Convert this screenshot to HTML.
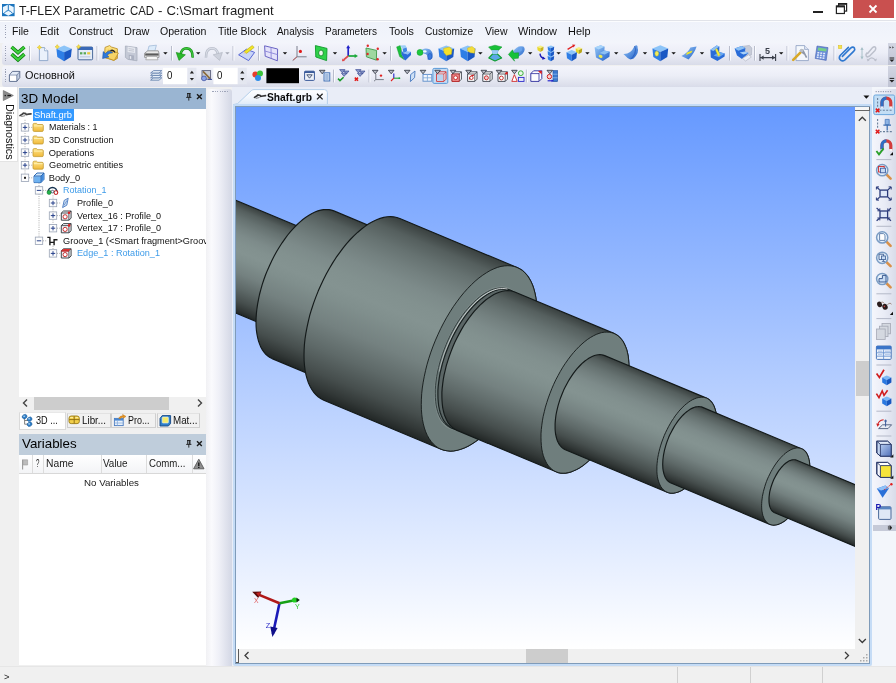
<!DOCTYPE html><html><head><meta charset="utf-8"><title>T-FLEX Parametric CAD</title><style>
*{margin:0;padding:0;box-sizing:border-box}
html,body{width:896px;height:683px;overflow:hidden;background:#f0f0f0;font-family:"Liberation Sans",sans-serif}
#r{position:relative;width:896px;height:683px;overflow:hidden;will-change:transform}
.a{position:absolute}
.t{position:absolute;white-space:nowrap;transform-origin:0 50%;display:block}
svg{position:absolute;overflow:visible}
</style></head><body><div id="r"><div class="a" style="left:0px;top:0px;width:896px;height:19.5px;background:#fff"></div>
<svg style="left:2.2px;top:3.7px" width="13" height="13" viewBox="0 0 13 13"><rect x="0" y="0" width="12.6" height="12.2" fill="#1b74bd"/><path d="M6.3 0.6L11.7 3L11.7 8.8L6.3 11.7L0.9 8.8L0.9 3Z" fill="#eaf6ff"/><path d="M6.3 0.6L6.3 6M2 9.4Q6.3 3.6 10.6 9.4" stroke="#1b74bd" stroke-width="1" fill="none"/></svg>
<span class="t" style="left:19.40px;top:3.25px;font-size:13.1px;line-height:16px;color:#1c1c1c;transform:scaleX(0.9346);">T-FLEX</span>
<span class="t" style="left:64.30px;top:3.25px;font-size:13.1px;line-height:16px;color:#1c1c1c;transform:scaleX(0.9664);">Parametric</span>
<span class="t" style="left:129.90px;top:3.25px;font-size:13.1px;line-height:16px;color:#1c1c1c;transform:scaleX(0.8713);">CAD</span>
<span class="t" style="left:158.00px;top:3.25px;font-size:13.1px;line-height:16px;color:#1c1c1c;transform:scaleX(1.0087);">-</span>
<span class="t" style="left:166.40px;top:3.25px;font-size:13.1px;line-height:16px;color:#1c1c1c;">C:\Smart</span>
<span class="t" style="left:222.00px;top:3.25px;font-size:13.1px;line-height:16px;color:#1c1c1c;">fragment</span>
<div class="a" style="left:853px;top:0px;width:41px;height:17.5px;background:#c9504f"></div>
<svg style="left:868px;top:4px" width="10" height="10"><path d="M1.5 1.5L8.5 8.5M8.5 1.5L1.5 8.5" stroke="#fff" stroke-width="1.8"/></svg>
<div class="a" style="left:812.5px;top:10.7px;width:10px;height:2px;background:#222"></div>
<svg style="left:835px;top:2px" width="13" height="13"><rect x="3.6" y="1.6" width="8" height="7.5" fill="none" stroke="#222" stroke-width="1.2"/><rect x="3.6" y="1.2" width="8" height="1.6" fill="#222"/><rect x="1.4" y="4" width="8" height="7.5" fill="#fff" stroke="#222" stroke-width="1.2"/><rect x="1.4" y="3.6" width="8" height="1.8" fill="#222"/></svg>
<div class="a" style="left:0px;top:19.5px;width:896px;height:23px;background:linear-gradient(#e1e3e9 0,#e1e3e9 1px,#fbfcfe 1px,#fbfcfe 2px,#eff2fa 2px,#f1f4fb 60%,#f3f5fb)"></div>
<div class="a" style="left:4.5px;top:24.5px;width:1.2px;height:1.2px;background:#9aa0b4"></div>
<div class="a" style="left:4.5px;top:26.9px;width:1.2px;height:1.2px;background:#9aa0b4"></div>
<div class="a" style="left:4.5px;top:29.3px;width:1.2px;height:1.2px;background:#9aa0b4"></div>
<div class="a" style="left:4.5px;top:31.7px;width:1.2px;height:1.2px;background:#9aa0b4"></div>
<div class="a" style="left:4.5px;top:34.1px;width:1.2px;height:1.2px;background:#9aa0b4"></div>
<div class="a" style="left:4.5px;top:36.5px;width:1.2px;height:1.2px;background:#9aa0b4"></div>
<span class="t" style="left:12.00px;top:26.42px;font-size:10.2px;line-height:12px;color:#111;transform:scaleX(1.0344);">File</span>
<span class="t" style="left:40.00px;top:26.42px;font-size:10.2px;line-height:12px;color:#111;transform:scaleX(1.0810);">Edit</span>
<span class="t" style="left:69.00px;top:26.42px;font-size:10.2px;line-height:12px;color:#111;transform:scaleX(1.0081);">Construct</span>
<span class="t" style="left:123.50px;top:26.42px;font-size:10.2px;line-height:12px;color:#111;transform:scaleX(1.0714);">Draw</span>
<span class="t" style="left:160.00px;top:26.42px;font-size:10.2px;line-height:12px;color:#111;transform:scaleX(1.0382);">Operation</span>
<span class="t" style="left:217.50px;top:26.42px;font-size:10.2px;line-height:12px;color:#111;transform:scaleX(1.0393);">Title Block</span>
<span class="t" style="left:277.00px;top:26.42px;font-size:10.2px;line-height:12px;color:#111;transform:scaleX(0.9742);">Analysis</span>
<span class="t" style="left:325.00px;top:26.42px;font-size:10.2px;line-height:12px;color:#111;transform:scaleX(0.9864);">Parameters</span>
<span class="t" style="left:388.50px;top:26.42px;font-size:10.2px;line-height:12px;color:#111;transform:scaleX(1.0500);">Tools</span>
<span class="t" style="left:425.00px;top:26.42px;font-size:10.2px;line-height:12px;color:#111;">Customize</span>
<span class="t" style="left:484.50px;top:26.42px;font-size:10.2px;line-height:12px;color:#111;transform:scaleX(1.0263);">View</span>
<span class="t" style="left:518.00px;top:26.42px;font-size:10.2px;line-height:12px;color:#111;transform:scaleX(1.0751);">Window</span>
<span class="t" style="left:567.50px;top:26.42px;font-size:10.2px;line-height:12px;color:#111;transform:scaleX(1.0726);">Help</span>
<div class="a" style="left:2px;top:42.5px;width:894px;height:22px;background:linear-gradient(#f3f4fb,#eceef7 45%,#d9dce9);border-radius:3px 0 0 3px"></div>
<div class="a" style="left:888px;top:42.5px;width:8px;height:22px;background:linear-gradient(#d3d6e3,#bfc3d3)"></div>
<div class="a" style="left:2px;top:66px;width:894px;height:20.5px;background:linear-gradient(#f3f4fb,#eceef7 45%,#d9dce9);border-radius:3px 0 0 3px"></div>
<div class="a" style="left:888px;top:66px;width:8px;height:20.5px;background:linear-gradient(#d3d6e3,#bfc3d3)"></div>
<div class="a" style="left:4.5px;top:45.5px;width:1.2px;height:1.2px;background:#9aa0b4"></div>
<div class="a" style="left:4.5px;top:47.9px;width:1.2px;height:1.2px;background:#9aa0b4"></div>
<div class="a" style="left:4.5px;top:50.3px;width:1.2px;height:1.2px;background:#9aa0b4"></div>
<div class="a" style="left:4.5px;top:52.7px;width:1.2px;height:1.2px;background:#9aa0b4"></div>
<div class="a" style="left:4.5px;top:55.1px;width:1.2px;height:1.2px;background:#9aa0b4"></div>
<div class="a" style="left:4.5px;top:57.5px;width:1.2px;height:1.2px;background:#9aa0b4"></div>
<div class="a" style="left:4.5px;top:59.9px;width:1.2px;height:1.2px;background:#9aa0b4"></div>
<div class="a" style="left:4.5px;top:69.0px;width:1.2px;height:1.2px;background:#9aa0b4"></div>
<div class="a" style="left:4.5px;top:71.4px;width:1.2px;height:1.2px;background:#9aa0b4"></div>
<div class="a" style="left:4.5px;top:73.8px;width:1.2px;height:1.2px;background:#9aa0b4"></div>
<div class="a" style="left:4.5px;top:76.2px;width:1.2px;height:1.2px;background:#9aa0b4"></div>
<div class="a" style="left:4.5px;top:78.6px;width:1.2px;height:1.2px;background:#9aa0b4"></div>
<div class="a" style="left:4.5px;top:81.0px;width:1.2px;height:1.2px;background:#9aa0b4"></div>
<svg style="left:0;top:0" width="896" height="66"><defs><linearGradient id="bl" x1="0" y1="0" x2="1" y2="1"><stop offset="0" stop-color="#9ccbf8"/><stop offset="1" stop-color="#1f5fc8"/></linearGradient><linearGradient id="gr" x1="0" y1="0" x2="0" y2="1"><stop offset="0" stop-color="#5fe05f"/><stop offset="1" stop-color="#129a12"/></linearGradient><linearGradient id="fy" x1="0" y1="0" x2="0" y2="1"><stop offset="0" stop-color="#ffe98a"/><stop offset="1" stop-color="#eab43a"/></linearGradient></defs><path d="M11.6 47.0L18 52.6L24.4 47.0" fill="none" stroke="#0d7a0d" stroke-width="3.6" stroke-linejoin="miter"/><path d="M11.6 47.0L18 52.6L24.4 47.0" fill="none" stroke="#3fd23f" stroke-width="2"/><path d="M11.6 54.2L18 59.800000000000004L24.4 54.2" fill="none" stroke="#0d7a0d" stroke-width="3.6" stroke-linejoin="miter"/><path d="M11.6 54.2L18 59.800000000000004L24.4 54.2" fill="none" stroke="#3fd23f" stroke-width="2"/><path d="M29.5 46V60.6" stroke="#b9bdcc" stroke-width="1"/><path d="M30.5 46V60.6" stroke="#fafbfe" stroke-width="1"/><path d="M39.4 47.6L44.6 47.6L47.8 50.8L47.8 60.6L39.4 60.6Z" fill="#eaf1fb" stroke="#8aa4c8" stroke-width="0.9" stroke-linejoin="round" /><path d="M44.6 47.6V50.8H47.8" fill="#fff" stroke="#8aa4c8" stroke-width="0.8"/><path d="M39.4 45.199999999999996L40.199999999999996 46.6L41.6 47.4L40.199999999999996 48.199999999999996L39.4 49.6L38.6 48.199999999999996L37.199999999999996 47.4L38.6 46.6Z" fill="#f6e04a" stroke="#d8b820" stroke-width="0.5"/><path d="M56.4 48.7L64.1 45.6L71.8 48.7L64.1 52.2Z" fill="#8cc4f8" /><path d="M56.4 48.7L64.1 52.2L64.1 61.2L57.3 57.1Z" fill="#2e7ee6" /><path d="M71.8 48.7L64.1 52.2L64.1 61.2L70.9 57.1Z" fill="#1a58c4" /><path d="M57.2 44.599999999999994L58.0 46.0L59.400000000000006 46.8L58.0 47.599999999999994L57.2 49.0L56.400000000000006 47.599999999999994L55.0 46.8L56.400000000000006 46.0Z" fill="#f6e04a" stroke="#d8b820" stroke-width="0.5"/><rect x="78" y="47" width="14.6" height="12.8" rx="1" fill="#e4ecf8" stroke="#4a6a9a" stroke-width="1"/><rect x="78" y="47" width="14.6" height="3" fill="#3a6ab8"/><rect x="80" y="52.2" width="2.4" height="2.2" fill="#58a858"/><rect x="83.6" y="52.2" width="2.4" height="2.2" fill="#58a858"/><rect x="87.2" y="52.2" width="3" height="2.2" fill="#e8c83a"/><path d="M80 56.8H90.4" stroke="#c4d0e4" stroke-width="1.4"/><path d="M78.6 44.599999999999994L79.39999999999999 46.0L80.8 46.8L79.39999999999999 47.599999999999994L78.6 49.0L77.8 47.599999999999994L76.39999999999999 46.8L77.8 46.0Z" fill="#f6e04a" stroke="#d8b820" stroke-width="0.5"/><path d="M97 46V60.6" stroke="#b9bdcc" stroke-width="1"/><path d="M98 46V60.6" stroke="#fafbfe" stroke-width="1"/><path d="M105.0 47.4L109.6 45.6L111.4 47.0L117.4 48.8L117.4 58.4L113.8 60.4L104.4 57.4Z" fill="url(#fy)" stroke="#b88a22" stroke-width="0.8" stroke-linejoin="round" /><path d="M108.4 50.2L118.4 53.0L114.2 60.4L104.6 57.2Z" fill="#f7d466" stroke="#b88a22" stroke-width="0.7" stroke-linejoin="round" /><path d="M112.8 52.8Q109.4 49.2 105.4 53.4L103.2 51.6L102.6 58.6L109 57L107 55.2Q109.6 52.8 112.8 52.8Z" fill="#2f78d8" stroke="#1a4a9a" stroke-width="0.5"/><path d="M110.4 50.6Q113.6 49.4 115 52.4" stroke="#222" stroke-width="1.3" fill="none"/><path d="M125.4 46.0L137.0 47.6L137.0 60.8L128.0 59.4L125.4 57.4Z" fill="#c4c9d6" stroke="#a8aebd" stroke-width="0.8" stroke-linejoin="round" /><path d="M127.6 46.6L135.0 47.8L135.0 53.0L127.6 52.0Z" fill="#e6e9f0" /><path d="M128.6 48.6L134 49.4M128.6 50.4L134 51.2" stroke="#b4b9c6" stroke-width="0.7"/><path d="M128.8 54.8L134.0 55.6L134.0 60.2L128.8 59.4Z" fill="#aab0c0" /><path d="M129.8 56.0L131.2 56.2L131.2 59.0L129.8 58.8Z" fill="#e6e9f0" /><path d="M149.0 46.0L156.4 45.2L154.8 51.2L147.6 51.6Z" fill="#dcebfa" stroke="#9ab4d4" stroke-width="0.7" stroke-linejoin="round" /><path d="M144.6 53.2L147.8 50.8L158.2 50.8L159.0 53.2L159.0 57.4L144.6 57.4Z" fill="#e8e8e8" stroke="#8a8a8a" stroke-width="0.8" stroke-linejoin="round" /><path d="M145.2 53.4L158.6 53.4L158.6 55.6L145.2 55.6Z" fill="#5a5a5a" /><path d="M146.6 56.4L157.0 56.4L158.0 59.8L145.8 59.8Z" fill="#f6f6f6" stroke="#9a9a9a" stroke-width="0.7" stroke-linejoin="round" /><path d="M163.20000000000002 52.2H167.6L165.4 54.6Z" fill="#111"/><path d="M171.5 46V60.6" stroke="#b9bdcc" stroke-width="1"/><path d="M172.5 46V60.6" stroke="#fafbfe" stroke-width="1"/><path d="M192.6 57.6Q193 48.6 186.6 48.2Q181.8 48.4 180.6 54" stroke="#138a13" stroke-width="2.5" fill="none"/><path d="M192.6 57.6Q193 48.6 186.6 48.2Q181.8 48.4 180.6 54" stroke="#3cc83c" stroke-width="1.2" fill="none"/><path d="M176.2 52.4L185.4 54.8L179 60.4Z" fill="#2cb82c" stroke="#138a13" stroke-width="0.6" stroke-linejoin="round"/><path d="M196.0 52.2H200.39999999999998L198.2 54.6Z" fill="#111"/><path d="M206 57.6Q205.6 48.6 212 48.2Q216.8 48.4 218 54" stroke="#b4b9c6" stroke-width="2.5" fill="none"/><path d="M206 57.6Q205.6 48.6 212 48.2Q216.8 48.4 218 54" stroke="#d8dce6" stroke-width="1.2" fill="none"/><path d="M222.4 52.4L213.2 54.8L219.6 60.4Z" fill="#cdd1dc" stroke="#aeb3c0" stroke-width="0.6" stroke-linejoin="round"/><path d="M225.20000000000002 52.2H229.6L227.4 54.6Z" fill="#a4a8b4"/><path d="M233 46V60.6" stroke="#b9bdcc" stroke-width="1"/><path d="M234 46V60.6" stroke="#fafbfe" stroke-width="1"/><path d="M238.6 54.8L246.4 49.2L254.6 52.4L248.6 60.6Z" fill="#c8d4f8" stroke="#4a5ad0" stroke-width="0.9" stroke-linejoin="round" /><path d="M244.2 51.6L252.2 45.6L254.2 47.4L246.4 53.4Z" fill="#f0e628" stroke="#b8a810" stroke-width="0.6" stroke-linejoin="round" /><path d="M244.2 51.6L246.4 53.4L243.4 53.6Z" fill="#e8c8a0" /><path d="M258.5 46V60.6" stroke="#b9bdcc" stroke-width="1"/><path d="M259.5 46V60.6" stroke="#fafbfe" stroke-width="1"/><path d="M264.6 45.8L277.6 49.0L277.4 60.8L265.2 56.2Z" fill="#e4e2fa" stroke="#6a64c4" stroke-width="1" stroke-linejoin="round" /><path d="M271 47.4L271.2 58.4M264.8 51L277.5 54.6" stroke="#8a84d8" stroke-width="0.9"/><path d="M282.8 52.2H287.2L285 54.6Z" fill="#111"/><path d="M297 46V56.8H306.6M297 56.8L292.6 60.6" stroke="#7a7f8c" stroke-width="1" fill="none"/><path d="M297 56.8L293 60.2" stroke="#c06a6a" stroke-width="1"/><circle cx="300.4" cy="51.4" r="1.6" fill="#e01818"/><path d="M315.4 45.6L327.0 48.4L326.6 60.6L315.8 57.0Z" fill="#2fd24a" stroke="#0f9a2a" stroke-width="0.9" stroke-linejoin="round" /><ellipse cx="321" cy="53" rx="2.4" ry="3" fill="#eef6ee" stroke="#0f8a24" stroke-width="0.9"/><path d="M332.8 52.2H337.2L335 54.6Z" fill="#111"/><path d="M348.2 56V47" stroke="#2222c8" stroke-width="1.7"/><path d="M346.2 48.2L348.2 45L350.2 48.2Z" fill="#2222c8"/><path d="M348.2 56H355.6" stroke="#18a838" stroke-width="1.7"/><path d="M354.6 54L358 56L354.6 58Z" fill="#18a838"/><path d="M348.2 56L343.6 59.8" stroke="#e04848" stroke-width="1.7"/><path d="M342.4 58.4L345 61L342 61.2Z" fill="#e04848"/><path d="M366.0 48.0L376.6 50.4L376.4 60.2L366.4 56.8Z" fill="#9ed8a0" stroke="#3f9a4a" stroke-width="0.9" stroke-linejoin="round" /><circle cx="367.8" cy="45.8" r="1.2" fill="#e02828"/><circle cx="377.8" cy="48.8" r="1.2" fill="#e02828"/><circle cx="377.6" cy="59.2" r="1.2" fill="#e02828"/><circle cx="367.6" cy="54" r="1.2" fill="#e02828"/><path d="M382.40000000000003 52.2H386.8L384.6 54.6Z" fill="#111"/><path d="M390.5 46V60.6" stroke="#b9bdcc" stroke-width="1"/><path d="M391.5 46V60.6" stroke="#fafbfe" stroke-width="1"/><path d="M396.6 46.9L400.2 45.6L401.2 48.8L401.6 54.4L404.2 59.6L399.6 56.6Z" fill="#1cc03c" stroke="#0f8f28" stroke-width="0.4" stroke-linejoin="round" /><path d="M400.2 45.6L405.4 45.2L406.6 47.4L402.6 48.8Z" fill="#9ccdf8" /><path d="M402.6 48.8L406.6 47.4L407.2 51.2L403.4 53.2Z" fill="#3f86e4" /><path d="M403.4 53.2L407.2 51.2L411.0 51.8L407.8 54.4Z" fill="#8cc0f6" /><path d="M401.4 50.0L403.4 53.2L407.8 54.4L411.0 51.8L411.0 55.0L405.4 60.4L404.2 59.6L401.6 54.4Z" fill="#2a6cd8" /><path d="M419.2 52Q424 46.4 430 49.6Q433.6 52.6 432.4 58Q430 60.8 427.6 59.4Q428.4 54.4 424.4 53.8Z" fill="url(#bl)"/><ellipse cx="429.8" cy="56.4" rx="2" ry="3" fill="#3a7ae0" stroke="#1f55b4" stroke-width="0.5"/><circle cx="420" cy="52.4" r="3" fill="#1ec83c" stroke="#0f9a28" stroke-width="0.5"/><ellipse cx="424.8" cy="51.4" rx="1.8" ry="1.2" fill="#f4faff"/><path d="M438.4 48.6L446.3 45.4L454.2 48.6L446.3 52.0Z" fill="#8cc4f8" /><path d="M438.4 48.6L446.3 52.0L446.3 61.2L439.3 57.1Z" fill="#2e7ee6" /><path d="M454.2 48.6L446.3 52.0L446.3 61.2L453.3 57.1Z" fill="#1a58c4" /><path d="M443.6 48.4L449.6 47.0L452.0 49.8L451.4 54.2L446.4 55.4L444.0 52.6Z" fill="#f4e02a" stroke="#c8b018" stroke-width="0.5" stroke-linejoin="round" /><path d="M460.0 48.6L467.7 45.4L475.4 48.6L467.7 52.0Z" fill="#8cc4f8" /><path d="M460.0 48.6L467.7 52.0L467.7 61.2L460.9 57.1Z" fill="#2e7ee6" /><path d="M475.4 48.6L467.7 52.0L467.7 61.2L474.5 57.1Z" fill="#1a58c4" /><path d="M467.6 48.0L472.0 46.4L475.0 48.8L474.6 53.2L470.4 52.8L467.6 51.0Z" fill="#f2dc3a" stroke="#c8b018" stroke-width="0.4" stroke-linejoin="round" /><path d="M478.2 52.2H482.59999999999997L480.4 54.6Z" fill="#111"/><path d="M488.6 47.0L495.0 45.2L502.0 47.0L498.6 50.2L491.6 50.2Z" fill="#18c038" stroke="#0f9428" stroke-width="0.5" stroke-linejoin="round" /><path d="M491.6 50.2L498.6 50.2L497.4 54.0L501.6 58.0L495.0 61.0L488.8 58.0L492.6 54.0Z" fill="url(#bl)" /><path d="M492.6 54.0L497.4 54.0L501.6 58.0L495.0 61.0L488.8 58.0Z" fill="#5aa8e8" stroke="#12a030" stroke-width="1.1" stroke-linejoin="round" /><path d="M492.2 50.4L498.0 50.4L497.4 54.0L492.6 54.0Z" fill="#9ccdf8" /><path d="M512.6 52Q517.6 44.6 523.4 46.6Q526.4 49.6 522.4 54Q518.4 57 514.6 58.6Z" fill="url(#bl)"/><path d="M519.8 47Q522.6 46.6 521.8 50.4Q519.8 52.4 517.4 51.6Z" fill="#6aa4ec"/><path d="M508.4 54.4L512.6 49.8L513.6 53.0L518.6 52.8L518.4 58.2L513.6 58.6L514.6 61.2Z" fill="#16c238" stroke="#0e9228" stroke-width="0.5" stroke-linejoin="round" /><path d="M528.0 52.2H532.4000000000001L530.2 54.6Z" fill="#111"/><path d="M537.2 46.7L540.4 45.4L543.6 46.7L540.4 48.2Z" fill="#f8f080" /><path d="M537.2 46.7L540.4 48.2L540.4 52.0L537.6 50.3Z" fill="#e8d82a" /><path d="M543.6 46.7L540.4 48.2L540.4 52.0L543.2 50.3Z" fill="#c8b418" /><path d="M540 53.6Q540.4 57.4 543.6 58.2" stroke="#1a1ab8" stroke-width="1.4" fill="none"/><path d="M542.8 56.4L545.6 58.8L542.2 59.8Z" fill="#1a1ab8"/><path d="M547.6 55.9L550.9 54.6L554.2 55.9L550.9 57.4Z" fill="#8cc4f8" /><path d="M547.6 55.9L550.9 57.4L550.9 61.2L548.0 59.5Z" fill="#2e7ee6" /><path d="M554.2 55.9L550.9 57.4L550.9 61.2L553.8 59.5Z" fill="#1a58c4" /><path d="M547.6 51.3L550.9 50.0L554.2 51.3L550.9 52.8Z" fill="#8cc4f8" /><path d="M547.6 51.3L550.9 52.8L550.9 56.6L548.0 54.9Z" fill="#2e7ee6" /><path d="M554.2 51.3L550.9 52.8L550.9 56.6L553.8 54.9Z" fill="#1a58c4" /><path d="M547.6 46.7L550.9 45.4L554.2 46.7L550.9 48.2Z" fill="#8cc4f8" /><path d="M547.6 46.7L550.9 48.2L550.9 52.0L548.0 50.3Z" fill="#2e7ee6" /><path d="M554.2 46.7L550.9 48.2L550.9 52.0L553.8 50.3Z" fill="#1a58c4" /><path d="M556.4 52.2H560.8000000000001L558.6 54.6Z" fill="#111"/><path d="M575.6 48.4L578.9 47.0L582.2 48.4L578.9 49.9Z" fill="#f8f080" /><path d="M575.6 48.4L578.9 49.9L578.9 54.0L576.0 52.2Z" fill="#e8d82a" /><path d="M582.2 48.4L578.9 49.9L578.9 54.0L581.8 52.2Z" fill="#b8a418" /><path d="M566.4 52.2L571.7 50.0L577.0 52.2L571.7 54.7Z" fill="#8cc4f8" /><path d="M566.4 52.2L571.7 54.7L571.7 61.2L567.0 58.3Z" fill="#2e7ee6" /><path d="M577.0 52.2L571.7 54.7L571.7 61.2L576.4 58.3Z" fill="#1a58c4" /><path d="M567.6 49.4L573.6 45.8" stroke="#e02020" stroke-width="1.3"/><path d="M572.2 44.6L575.4 44.8L573.6 47.4Z" fill="#e02020"/><path d="M585.1999999999999 52.2H589.6L587.4 54.6Z" fill="#111"/><path d="M594.6 47.6L600.6 45.2L604.6 46.8L604.4 50.4L609.8 51.8L609.4 56.8L602.8 61.0L596.0 57.6Z" fill="url(#bl)" /><path d="M594.6 47.6L600.6 45.2L604.6 46.8L598.6 49.6Z" fill="#a8d4fa" /><path d="M604.4 50.4L609.8 51.8L604.6 54.6L599.6 53.0Z" fill="#8cc0f4" /><ellipse cx="600.6" cy="56.4" rx="2" ry="1.4" fill="#f0ea50" transform="rotate(20 600.6 56.4)"/><path d="M614.0 52.2H618.4000000000001L616.2 54.6Z" fill="#111"/><path d="M623.4 54Q630.6 54.4 634.6 46Q638 44 637.6 48Q639.6 52.4 633.6 58.6Q630.6 60.4 627.6 58Z" fill="url(#bl)"/><path d="M634.6 46Q636.4 49 634.8 53.6Q633.4 57 630.4 59.4" stroke="#1a4ab0" stroke-width="0.6" fill="none"/><path d="M642.8 52.2H647.2L645 54.6Z" fill="#111"/><path d="M652.4 48.4L660.3 45.2L668.2 48.4L660.3 51.9Z" fill="#8cc4f8" /><path d="M652.4 48.4L660.3 51.9L660.3 61.2L653.3 57.0Z" fill="#2e7ee6" /><path d="M668.2 48.4L660.3 51.9L660.3 61.2L667.3 57.0Z" fill="#1a58c4" /><ellipse cx="656.8" cy="53.6" rx="1.9" ry="2.6" fill="#f2ec5a" stroke="#b8b020" stroke-width="0.4"/><path d="M671.4 52.2H675.8000000000001L673.6 54.6Z" fill="#111"/><path d="M681.4 56Q688 53 690.4 47.6L696.6 46.6Q694.6 53 688.6 59.6Z" fill="url(#bl)"/><path d="M687.0 52.4L692.6 50.4L691.4 52.8L686.0 55.0Z" fill="#f0e628" /><path d="M699.8 52.2H704.2L702 54.6Z" fill="#111"/><path d="M710.4 49.8L716.6 45.4L719.4 46.4L719.2 52.0L724.8 53.4L724.6 56.6L717.4 61.0L710.8 57.4Z" fill="#2a6cd8" /><path d="M710.4 49.8L716.6 45.4L719.4 46.4L713.4 51.0Z" fill="#8cc0f4" /><path d="M713.6 55.4L719.2 52.0L724.8 53.4L719.0 57.2Z" fill="#6aa8f0" /><path d="M715.2 49.6L717.0 48.4L720.2 55.0L718.2 56.2Z" fill="#f4ec3a" stroke="#c8b818" stroke-width="0.3" stroke-linejoin="round" /><path d="M729.5 46V60.6" stroke="#b9bdcc" stroke-width="1"/><path d="M730.5 46V60.6" stroke="#fafbfe" stroke-width="1"/><path d="M742.0 46.4L749.4 45.4L751.8 48.0L751.4 55.0L745.0 56.4Z" fill="#c8ccd8" stroke="#a0a6b6" stroke-width="0.5" stroke-linejoin="round" /><path d="M734.6 48.6L741.6 46.0L745.4 48.0L745.0 51.6L748.6 53.0L742.0 59.0L737.0 55.6Z" fill="#2a6cd8" /><path d="M734.6 48.6L741.6 46.0L745.4 48.0L738.4 50.8Z" fill="#8cc0f4" /><path d="M739.6 52.4L745.0 51.6L748.6 53.0L743.4 54.6Z" fill="#a8d0f8" /><path d="M742.4 58.4L748.6 54.8L751.4 57.0L745.6 61.0Z" fill="#eef0f6" stroke="#a0a6b6" stroke-width="0.5" stroke-linejoin="round" /><path d="M754.5 46V60.6" stroke="#b9bdcc" stroke-width="1"/><path d="M755.5 46V60.6" stroke="#fafbfe" stroke-width="1"/><path d="M760 54V61M775.6 54V61M760.6 57.6H775" stroke="#3a3f4a" stroke-width="1.1" fill="none"/><path d="M760.4 57.6L763.6 55.4V59.8ZM775.2 57.6L772 55.4V59.8Z" fill="#3a3f4a"/><text x="765" y="54" font-family="Liberation Sans, sans-serif" font-weight="bold" font-size="9" fill="#3a3f4a">5</text><path d="M779.0 52.2H783.4000000000001L781.2 54.6Z" fill="#111"/><path d="M787 46V60.6" stroke="#b9bdcc" stroke-width="1"/><path d="M788 46V60.6" stroke="#fafbfe" stroke-width="1"/><path d="M796.0 45.6L804.6 45.6L808.4 49.4L808.4 60.6L796.0 60.6Z" fill="#f4f7fc" stroke="#8a9cc0" stroke-width="0.8" stroke-linejoin="round" /><path d="M804.6 45.6V49.4H808.4" fill="#dfe6f4" stroke="#8a9cc0" stroke-width="0.7"/><path d="M793.2 59.8L801.6 51.4" stroke="#d8a828" stroke-width="2.6" stroke-linecap="round"/><path d="M800 50L804 54M802.4 49.4L806.6 57.6" stroke="#9098a8" stroke-width="1.6"/><circle cx="801.6" cy="50.6" r="1.8" fill="#b8bec8"/><path d="M817.0 46.0L828.0 47.6L826.2 60.4L815.2 58.4Z" fill="#6a8cd8" stroke="#4a64b0" stroke-width="0.6" stroke-linejoin="round" /><path d="M818.2 47.6L826.6 48.8L826.2 51.6L817.8 50.4Z" fill="#78d088" /><rect x="817.4" y="52.0" width="1.9" height="1.5" fill="#e4ecfa"/><rect x="820.3" y="52.4" width="1.9" height="1.5" fill="#e4ecfa"/><rect x="823.2" y="52.8" width="1.9" height="1.5" fill="#e4ecfa"/><rect x="817.0" y="54.3" width="1.9" height="1.5" fill="#e4ecfa"/><rect x="819.9" y="54.7" width="1.9" height="1.5" fill="#e4ecfa"/><rect x="822.8" y="55.1" width="1.9" height="1.5" fill="#e4ecfa"/><rect x="816.7" y="56.6" width="1.9" height="1.5" fill="#e4ecfa"/><rect x="819.6" y="57.0" width="1.9" height="1.5" fill="#e4ecfa"/><rect x="822.5" y="57.4" width="1.9" height="1.5" fill="#e4ecfa"/><path d="M834 46V60.6" stroke="#b9bdcc" stroke-width="1"/><path d="M835 46V60.6" stroke="#fafbfe" stroke-width="1"/><path d="M842.4 56.4L850.6 48.2Q853 46.2 854.4 48Q855.4 49.6 853.6 51.4L845 59.8Q842 62 840 59.6Q838.4 57.2 840.6 55L848.4 47.4" stroke="#2f78d0" stroke-width="1.6" fill="none" stroke-linecap="round"/><rect x="838.4" y="45.4" width="3.4" height="3.2" fill="#f6e44a" stroke="#d8bc28" stroke-width="0.5"/><path d="M867.6 53.4L872.6 47.6Q874.6 46 875.6 47.6Q876.2 49 875 50.4L869.4 56.2Q867.4 57.6 866.2 56Q865.4 54.6 866.8 53" stroke="#bcc0cc" stroke-width="1.5" fill="none" stroke-linecap="round"/><path d="M862 48V58.4" stroke="#a8c0c8" stroke-width="1"/><path d="M860.4 50L862 47L863.6 50ZM860.4 56.6L862 59.6L863.6 56.6Z" fill="#a8c0c8"/><path d="M868 60.4Q871.6 55.4 875.6 60.4" stroke="#bcc0cc" stroke-width="1.1" fill="none"/><path d="M866.6 58.6L867.6 61.4L869.8 60Z M877 58.6L876 61.4L873.8 60Z" fill="#bcc0cc"/><path d="M889.6 46.2L891 47.4L889.6 48.6ZM892.4 46.2L893.8 47.4L892.4 48.6Z" fill="#222"/><path d="M889.6 58H894.2" stroke="#222" stroke-width="1"/><path d="M889.4 59.6H894.4L891.9 62Z" fill="#222"/></svg>
<svg style="left:0;top:0" width="896" height="88"><path d="M9.4 75.0L12.4 71.4L19.8 71.4L19.8 77.6L16.8 81.4L9.4 81.4Z" fill="#c4d0e4" stroke="#5a6a8a" stroke-width="0.9" stroke-linejoin="round" /><path d="M9.4 75H16.8V81.4M16.8 75L19.8 71.4" fill="none" stroke="#5a6a8a" stroke-width="0.8"/><rect x="10" y="75.6" width="6.2" height="5.2" fill="#fff"/><path d="M10.2 74.6L12.8 71.9L19.0 71.9L16.6 74.6Z" fill="#e4ecf8" /><path d="M150.6 80.2L153.6 77.8L161.8 77.8L159.0 80.2Z" fill="#e6eef8" stroke="#5a7aa8" stroke-width="0.8" stroke-linejoin="round" /><path d="M150.6 77.8L153.6 75.4L161.8 75.4L159.0 77.8Z" fill="#e6eef8" stroke="#5a7aa8" stroke-width="0.8" stroke-linejoin="round" /><path d="M150.6 75.4L153.6 73.0L161.8 73.0L159.0 75.4Z" fill="#e6eef8" stroke="#5a7aa8" stroke-width="0.8" stroke-linejoin="round" /><path d="M150.6 73.0L153.6 70.6L161.8 70.6L159.0 73.0Z" fill="#e6eef8" stroke="#5a7aa8" stroke-width="0.8" stroke-linejoin="round" /><rect x="163" y="67.8" width="24.4" height="16.4" fill="#fff"/><rect x="187.4" y="67.8" width="9" height="16.4" fill="#e4e7f0"/><path d="M189.8 73.4H194L191.9 70.8ZM189.8 78H194L191.9 80.6Z" fill="#222"/><rect x="202" y="70.6" width="8.6" height="8.6" fill="#c8ccd8" stroke="#5a5f7a" stroke-width="0.9"/><path d="M203 71.4L210 78.6" stroke="#8a6a3a" stroke-width="1.6"/><circle cx="204" cy="78.4" r="2.4" fill="#8aa4e8" stroke="#3a4a9a" stroke-width="0.7"/><path d="M208 79.4H212" stroke="#3a4a9a" stroke-width="1"/><rect x="213.4" y="67.8" width="24.4" height="16.4" fill="#fff"/><rect x="237.8" y="67.8" width="9" height="16.4" fill="#e4e7f0"/><path d="M240.2 73.4H244.4L242.3 70.8ZM240.2 78H244.4L242.3 80.6Z" fill="#222"/><circle cx="255.4" cy="74.4" r="3" fill="#e83c2c"/><circle cx="260" cy="73.4" r="3" fill="#3cc43c"/><circle cx="258" cy="78" r="3" fill="#2c8ce8"/><rect x="266.4" y="68.2" width="32.6" height="15" fill="#000"/><rect x="304.6" y="71.2" width="9.8" height="9.2" rx="0.8" fill="#eef2fa" stroke="#3a5a9a" stroke-width="1"/><rect x="304.6" y="71.2" width="9.8" height="1.8" fill="#3a5a9a"/><path d="M306.8 74.8H312.2L309.5 78.2Z" fill="#dfe4ee" stroke="#2a3a5a" stroke-width="0.8"/><path d="M319.4 70.3H325.0L322.2 73.8Z" fill="#b8bcc6" stroke="#2a2e38" stroke-width="0.8" stroke-linejoin="round"/><rect x="324" y="72.8" width="5.8" height="8.2" fill="#dce8f8" stroke="#3a6ab0" stroke-width="0.9"/><path d="M325.2 75H328.6M325.2 77H328.6M325.2 79H328.6" stroke="#3a6ab0" stroke-width="0.7"/><path d="M333.5 69.6V82.4" stroke="#b9bdcc" stroke-width="1"/><path d="M334.5 69.6V82.4" stroke="#fafbfe" stroke-width="1"/><path d="M339.6 69.6H345.0L342.3 72.8Z" fill="#8a9ac8" stroke="#2a3a8a" stroke-width="0.6"/><path d="M343.6 71H349.0L346.3 74.2Z" fill="#8a9ac8" stroke="#2a3a8a" stroke-width="0.6"/><path d="M341.4 73.2H346.79999999999995L344.09999999999997 76.4Z" fill="#8a9ac8" stroke="#2a3a8a" stroke-width="0.6"/><path d="M338 78.6L340 80.6L343.6 77.2" stroke="#1a9a2a" stroke-width="1.5" fill="none"/><path d="M355.6 69.6H361.0L358.3 72.8Z" fill="#8a9ac8" stroke="#2a3a8a" stroke-width="0.6"/><path d="M359.6 71H365.0L362.3 74.2Z" fill="#8a9ac8" stroke="#2a3a8a" stroke-width="0.6"/><path d="M357.4 73.2H362.79999999999995L360.09999999999997 76.4Z" fill="#8a9ac8" stroke="#2a3a8a" stroke-width="0.6"/><path d="M354.79999999999995 77.60000000000001L358.0 80.8M358.0 77.60000000000001L354.79999999999995 80.8" stroke="#e01818" stroke-width="1.5"/><path d="M369 69.6V82.4" stroke="#b9bdcc" stroke-width="1"/><path d="M370 69.6V82.4" stroke="#fafbfe" stroke-width="1"/><path d="M372.4 70.3H378.0L375.2 73.8Z" fill="#b8bcc6" stroke="#2a2e38" stroke-width="0.8" stroke-linejoin="round"/><path d="M375.8 74V79.6H383.8M375.8 79.6L374 81.2" stroke="#6a6f7a" stroke-width="0.9" fill="none"/><circle cx="381" cy="75.6" r="1.2" fill="#e02020"/><path d="M388.4 70.3H394.0L391.2 73.8Z" fill="#b8bcc6" stroke="#2a2e38" stroke-width="0.8" stroke-linejoin="round"/><path d="M393.8 73.6V78.2" stroke="#2222c8" stroke-width="1.1"/><path d="M393.8 78.2H399" stroke="#18a838" stroke-width="1.1"/><path d="M393.8 78.2L391 81" stroke="#e02020" stroke-width="1.1"/><circle cx="399.4" cy="78.2" r="0.9" fill="#18a838"/><path d="M404.4 70.3H410.0L407.2 73.8Z" fill="#b8bcc6" stroke="#2a2e38" stroke-width="0.8" stroke-linejoin="round"/><path d="M410.6 74.6L415.0 71.0L414.6 77.6L410.4 81.6Z" fill="#cfe0f5" stroke="#4a7ac0" stroke-width="0.9" stroke-linejoin="round" /><path d="M420.2 70.3H425.8L423.0 73.8Z" fill="#b8bcc6" stroke="#2a2e38" stroke-width="0.8" stroke-linejoin="round"/><rect x="423" y="74.4" width="8.8" height="6.8" fill="#f2f6fc" stroke="#5a8ac8" stroke-width="0.9"/><path d="M427.4 74.4V81.2M423 77.8H431.8" stroke="#7aa4d8" stroke-width="0.8"/><rect x="432.9" y="68.4" width="14.9" height="15" rx="1.2" fill="#c4dcf4" stroke="#5a9ad8" stroke-width="1"/><path d="M436.6 74.0L438.8 71.8H446.0V79.2L443.8 81.39999999999999H436.6Z" fill="#e4eefa" stroke="#d02828" stroke-width="0.9" stroke-linejoin="round"/><path d="M436.6 74.0H443.8V81.39999999999999M443.8 74.0L446.0 71.8" fill="none" stroke="#d02828" stroke-width="0.8"/><rect x="437.2" y="74.6" width="6" height="6.2" fill="#b8d4f0"/><path d="M434.8 70.3H440.40000000000003L437.6 73.8Z" fill="#b8bcc6" stroke="#2a2e38" stroke-width="0.8" stroke-linejoin="round"/><path d="M452 74.0L454.2 71.8H461.4V79.2L459.2 81.39999999999999H452Z" fill="#fff" stroke="#3a3f4a" stroke-width="0.9" stroke-linejoin="round"/><path d="M452 74.0H459.2V81.39999999999999M459.2 74.0L461.4 71.8" fill="none" stroke="#3a3f4a" stroke-width="0.8"/><rect x="452.5" y="74.5" width="6.2" height="6.4" fill="#f08a8a"/><path d="M452 74H459.2V81.4H452Z" fill="none" stroke="#d02828" stroke-width="0.9"/><circle cx="455.6" cy="77.7" r="1.9" fill="#fff" stroke="#c02020" stroke-width="0.9"/><path d="M450.2 70.3H455.8L453.0 73.8Z" fill="#b8bcc6" stroke="#2a2e38" stroke-width="0.8" stroke-linejoin="round"/><path d="M467.6 74.0L469.8 71.8H477.0V79.2L474.8 81.39999999999999H467.6Z" fill="#fff" stroke="#3a3f4a" stroke-width="0.9" stroke-linejoin="round"/><path d="M467.6 74.0H474.8V81.39999999999999M474.8 74.0L477.0 71.8" fill="none" stroke="#3a3f4a" stroke-width="0.8"/><path d="M469.4 79.4Q470 75.6 474 75.2" stroke="#d02020" stroke-width="1.2" fill="none"/><circle cx="471.4" cy="77.8" r="1.7" fill="#fff" stroke="#c02020" stroke-width="0.9"/><path d="M465.8 70.3H471.40000000000003L468.6 73.8Z" fill="#b8bcc6" stroke="#2a2e38" stroke-width="0.8" stroke-linejoin="round"/><path d="M482.8 74.0L485.0 71.8H492.2V79.2L490.0 81.39999999999999H482.8Z" fill="#fff" stroke="#3a3f4a" stroke-width="0.9" stroke-linejoin="round"/><path d="M482.8 74.0H490.0V81.39999999999999M490.0 74.0L492.2 71.8" fill="none" stroke="#3a3f4a" stroke-width="0.8"/><circle cx="486.4" cy="77.8" r="2" fill="#f8c8c8" stroke="#c02020" stroke-width="0.9"/><path d="M481 70.3H486.6L483.8 73.8Z" fill="#b8bcc6" stroke="#2a2e38" stroke-width="0.8" stroke-linejoin="round"/><path d="M498 74.0L500.2 71.8H507.4V79.2L505.2 81.39999999999999H498Z" fill="#fff" stroke="#3a3f4a" stroke-width="0.9" stroke-linejoin="round"/><path d="M498 74.0H505.2V81.39999999999999M505.2 74.0L507.4 71.8" fill="none" stroke="#3a3f4a" stroke-width="0.8"/><circle cx="501.4" cy="78" r="1.9" fill="#fff" stroke="#c02020" stroke-width="0.9"/><path d="M506.6 73.4L507.2 72.2" stroke="#d02020" stroke-width="1.4"/><circle cx="506.4" cy="73.4" r="1.2" fill="#e02020"/><path d="M496.2 70.3H501.8L499.0 73.8Z" fill="#b8bcc6" stroke="#2a2e38" stroke-width="0.8" stroke-linejoin="round"/><path d="M511.6 70.3H517.2L514.4 73.8Z" fill="#b8bcc6" stroke="#2a2e38" stroke-width="0.8" stroke-linejoin="round"/><path d="M514.4 74.6L517.2 81.4H511.8Z" fill="#fff" stroke="#d02828" stroke-width="0.9"/><circle cx="520.8" cy="73.2" r="2.4" fill="#e8f8e8" stroke="#28a828" stroke-width="0.9"/><rect x="518.4" y="77.4" width="5.6" height="4" fill="#e8ecfa" stroke="#2828c8" stroke-width="0.9"/><path d="M526.4 69.6V82.4" stroke="#b9bdcc" stroke-width="1"/><path d="M527.4 69.6V82.4" stroke="#fafbfe" stroke-width="1"/><path d="M530.8 73.6L533.6 70.8L541.8 70.8L541.8 78.6L539.0 81.4L530.8 81.4Z" fill="#fdfdff" stroke="#2a2a9a" stroke-width="0.9" stroke-linejoin="round" /><path d="M530.8 73.6H539V81.4M539 73.6L541.8 70.8" fill="none" stroke="#2a2a9a" stroke-width="0.8"/><path d="M538 70.9L541.8 70.8L541.7 74.6Z" fill="#e02020"/><path d="M547 70.3H552.6L549.8 73.8Z" fill="#b8bcc6" stroke="#2a2e38" stroke-width="0.8" stroke-linejoin="round"/><rect x="553" y="70.6" width="4.6" height="11" fill="#3a7ad0" stroke="#1a4a9a" stroke-width="0.6"/><path d="M553 74.2H557.6M553 77.8H557.6" stroke="#9ac4f4" stroke-width="0.7"/><circle cx="549.4" cy="76.6" r="2.2" fill="#f8d0d0" stroke="#d02020" stroke-width="1"/><path d="M547.6 80.8H552.4" stroke="#1a1ac8" stroke-width="1.1"/><path d="M551.6 79.4L553.6 80.8L551.6 82.2Z" fill="#1a1ac8"/><path d="M889.6 78.4H894.2" stroke="#222" stroke-width="1"/><path d="M889.4 80H894.4L891.9 82.4Z" fill="#222"/></svg><span class="t" style="left:167.00px;top:70.12px;font-size:10.2px;line-height:12px;color:#111;transform:scaleX(0.9520);">0</span><span class="t" style="left:217.20px;top:70.12px;font-size:10.2px;line-height:12px;color:#111;transform:scaleX(0.9520);">0</span>
<span class="t" style="left:25.00px;top:70.12px;font-size:10.2px;line-height:12px;color:#111;transform:scaleX(1.0693);">Основной</span>
<div class="a" style="left:0px;top:87px;width:18px;height:75px;background:#fff;border-right:1px solid #e3e3e3;border-bottom:1px solid #e3e3e3"></div>
<svg style="left:0px;top:87px" width="18" height="20" viewBox="0 0 18 20"><g transform="translate(9 0)"><path d="M-5.7 13.6L4.4 8.5L-5.7 3.5Z" fill="#8c8c8c" stroke="#6a6a6a" stroke-width="0.6" stroke-linejoin="round"/><rect x="-1.6" y="7.9" width="3.6" height="1.3" fill="#1a1a1a"/><rect x="-4.4" y="7.9" width="1.3" height="1.3" fill="#1a1a1a"/></g></svg><span class="t" style="left:3.2px;top:104.2px;font-size:10px;line-height:12px;color:#111;transform-origin:0 0;transform:rotate(90deg) translate(0,-12px) scaleX(1.075);">Diagnostics</span>
<div class="a" style="left:19px;top:88px;width:187px;height:20.5px;background:#9ab5d2"></div>
<span class="t" style="left:21.40px;top:90.55px;font-size:13.2px;line-height:16px;color:#000;transform:scaleX(1.0143);">3D Model</span>
<svg style="left:186.2px;top:93.4px" width="18" height="9" viewBox="0 0 18 9"><path d="M1 0.5H4.6M1.7 0.5V4.2M4 0.5V4.2M3.3 0.5V4.2M0.2 4.4H5.4M2.8 4.4V7.6" stroke="#1a1a1a" stroke-width="0.9" fill="none"/><path d="M11 1.2L15.8 6M15.8 1.2L11 6" stroke="#1a1a1a" stroke-width="1.4" fill="none"/></svg>
<div class="a" style="left:19px;top:108.5px;width:187px;height:288px;background:#fff"></div>
<div class="a" style="left:19px;top:108.5px;width:187px;height:288px;overflow:hidden"><svg style="left:-19px;top:-108.5px" width="224" height="400"><defs><linearGradient id="fold" x1="0" y1="0" x2="0" y2="1"><stop offset="0" stop-color="#ffe58a"/><stop offset="1" stop-color="#f0b93a"/></linearGradient></defs><path d="M25 119.8V177.8M39 182.8V240.8M53 195.39999999999998V228.2M53 245.8V253.39999999999998" stroke="#a8a8a8" stroke-width="0.9" stroke-dasharray="1 1.2" fill="none"/><path d="M29 127.39999999999999H33" stroke="#a8a8a8" stroke-width="0.9" stroke-dasharray="1 1.2"/><path d="M29 140.0H33" stroke="#a8a8a8" stroke-width="0.9" stroke-dasharray="1 1.2"/><path d="M29 152.6H33" stroke="#a8a8a8" stroke-width="0.9" stroke-dasharray="1 1.2"/><path d="M29 165.2H33" stroke="#a8a8a8" stroke-width="0.9" stroke-dasharray="1 1.2"/><path d="M29 177.8H33" stroke="#a8a8a8" stroke-width="0.9" stroke-dasharray="1 1.2"/><path d="M43 190.39999999999998H47" stroke="#a8a8a8" stroke-width="0.9" stroke-dasharray="1 1.2"/><path d="M43 240.8H47" stroke="#a8a8a8" stroke-width="0.9" stroke-dasharray="1 1.2"/><path d="M57 203.0H61" stroke="#a8a8a8" stroke-width="0.9" stroke-dasharray="1 1.2"/><path d="M57 215.6H61" stroke="#a8a8a8" stroke-width="0.9" stroke-dasharray="1 1.2"/><path d="M57 228.2H61" stroke="#a8a8a8" stroke-width="0.9" stroke-dasharray="1 1.2"/><path d="M57 253.39999999999998H61" stroke="#a8a8a8" stroke-width="0.9" stroke-dasharray="1 1.2"/><path d="M20 115.6L22.2 114.2L23.4 113.2L25.6 113.6L26.2 114.6L28.5 114.2L31 113.89999999999999" stroke="#222" stroke-width="1.7" fill="none" stroke-linecap="round" opacity="0.85"/><path d="M21.2 116.6L25 115.7" stroke="#222" stroke-width="0.9" opacity="0.6"/><rect x="21.3" y="123.69999999999999" width="7.4" height="7.4" fill="#fdfdfd" stroke="#9aa4b6" stroke-width="0.8"/><path d="M22.8 127.39999999999999H27.2M25 125.19999999999999V129.6" stroke="#27408b" stroke-width="1"/><path d="M33.0 124.6Q33.0 123.39999999999999 34.2 123.39999999999999L36.5 123.39999999999999L37.7 124.49999999999999L42.1 124.49999999999999Q43.3 124.49999999999999 43.3 125.69999999999999L43.3 130.2Q43.3 131.39999999999998 42.1 131.39999999999998L34.2 131.39999999999998Q33.0 131.39999999999998 33.0 130.2Z" fill="url(#fold)" stroke="#c29a32" stroke-width="0.8"/><path d="M33.9 125.89999999999999H42.5" stroke="#fff3b8" stroke-width="0.9"/><rect x="21.3" y="136.3" width="7.4" height="7.4" fill="#fdfdfd" stroke="#9aa4b6" stroke-width="0.8"/><path d="M22.8 140.0H27.2M25 137.8V142.2" stroke="#27408b" stroke-width="1"/><path d="M33.0 137.2Q33.0 136.0 34.2 136.0L36.5 136.0L37.7 137.1L42.1 137.1Q43.3 137.1 43.3 138.3L43.3 142.8Q43.3 144.0 42.1 144.0L34.2 144.0Q33.0 144.0 33.0 142.8Z" fill="url(#fold)" stroke="#c29a32" stroke-width="0.8"/><path d="M33.9 138.5H42.5" stroke="#fff3b8" stroke-width="0.9"/><rect x="21.3" y="148.9" width="7.4" height="7.4" fill="#fdfdfd" stroke="#9aa4b6" stroke-width="0.8"/><path d="M22.8 152.6H27.2M25 150.4V154.79999999999998" stroke="#27408b" stroke-width="1"/><path d="M33.0 149.79999999999998Q33.0 148.6 34.2 148.6L36.5 148.6L37.7 149.7L42.1 149.7Q43.3 149.7 43.3 150.9L43.3 155.4Q43.3 156.6 42.1 156.6L34.2 156.6Q33.0 156.6 33.0 155.4Z" fill="url(#fold)" stroke="#c29a32" stroke-width="0.8"/><path d="M33.9 151.1H42.5" stroke="#fff3b8" stroke-width="0.9"/><rect x="21.3" y="161.5" width="7.4" height="7.4" fill="#fdfdfd" stroke="#9aa4b6" stroke-width="0.8"/><path d="M22.8 165.2H27.2M25 163.0V167.39999999999998" stroke="#27408b" stroke-width="1"/><path d="M33.0 162.39999999999998Q33.0 161.2 34.2 161.2L36.5 161.2L37.7 162.29999999999998L42.1 162.29999999999998Q43.3 162.29999999999998 43.3 163.5L43.3 168.0Q43.3 169.2 42.1 169.2L34.2 169.2Q33.0 169.2 33.0 168.0Z" fill="url(#fold)" stroke="#c29a32" stroke-width="0.8"/><path d="M33.9 163.7H42.5" stroke="#fff3b8" stroke-width="0.9"/><rect x="21.3" y="174.10000000000002" width="7.4" height="7.4" fill="#fdfdfd" stroke="#9aa4b6" stroke-width="0.8"/><rect x="24" y="176.8" width="2" height="2" fill="#222"/><path d="M34 176.0L37 173.0L44 173.0L44 179.4L41 182.60000000000002L34 182.60000000000002Z" fill="#cfe6fa" stroke="#1f5fae" stroke-width="0.9" stroke-linejoin="round"/><rect x="34.4" y="176.4" width="6.4" height="5.9" fill="#6fb2f0"/><path d="M41.2 176.20000000000002L43.7 173.60000000000002V179.3L41.2 182.0Z" fill="#3f8ade"/><path d="M34 176.0H41V182.60000000000002M41 176.0L44 173.0" fill="none" stroke="#1f5fae" stroke-width="0.9"/><rect x="35.3" y="186.7" width="7.4" height="7.4" fill="#fdfdfd" stroke="#9aa4b6" stroke-width="0.8"/><path d="M36.8 190.39999999999998H41.2" stroke="#27408b" stroke-width="1"/><path d="M48.1 191.99999999999997A4.4 4.4 0 0 1 56.9 191.99999999999997" fill="none" stroke="#16324f" stroke-width="1.5"/><circle cx="49.1" cy="192.39999999999998" r="2.1" fill="#21b24a" stroke="#0a6b26" stroke-width="0.5"/><circle cx="55.9" cy="192.59999999999997" r="1.9" fill="#fff" stroke="#c02020" stroke-width="1.1"/><circle cx="52.5" cy="191.59999999999997" r="1.3" fill="#fff" stroke="#16324f" stroke-width="0.7"/><rect x="49.3" y="199.3" width="7.4" height="7.4" fill="#fdfdfd" stroke="#9aa4b6" stroke-width="0.8"/><path d="M50.8 203.0H55.2M53 200.8V205.2" stroke="#27408b" stroke-width="1"/><path d="M62.6 207.6L64.2 200.4L68.2 198.2L66.8 205.2Z" fill="#cfe0f5" stroke="#4a7ac0" stroke-width="0.9" stroke-linejoin="round"/><path d="M64 205.4L67 200.4" stroke="#4a7ac0" stroke-width="0.7"/><rect x="49.3" y="211.9" width="7.4" height="7.4" fill="#fdfdfd" stroke="#9aa4b6" stroke-width="0.8"/><path d="M50.8 215.6H55.2M53 213.4V217.79999999999998" stroke="#27408b" stroke-width="1"/><path d="M61.3 213.0L63.5 211.0L71.1 211.0L71.1 218.2L68.9 220.2L61.3 220.2Z" fill="#eef2f6" stroke="#2e3238" stroke-width="0.9" stroke-linejoin="round"/><path d="M61.3 213.0H68.9V220.2M68.9 213.0L71.1 211.0" fill="none" stroke="#2e3238" stroke-width="0.8"/><circle cx="69.1" cy="212.79999999999998" r="1.3" fill="#e02020"/><circle cx="65.1" cy="216.79999999999998" r="2.1" fill="#fff" stroke="#c83030" stroke-width="1"/><rect x="49.3" y="224.5" width="7.4" height="7.4" fill="#fdfdfd" stroke="#9aa4b6" stroke-width="0.8"/><path d="M50.8 228.2H55.2M53 226.0V230.39999999999998" stroke="#27408b" stroke-width="1"/><path d="M61.3 225.6L63.5 223.6L71.1 223.6L71.1 230.79999999999998L68.9 232.79999999999998L61.3 232.79999999999998Z" fill="#eef2f6" stroke="#2e3238" stroke-width="0.9" stroke-linejoin="round"/><path d="M61.3 225.6H68.9V232.79999999999998M68.9 225.6L71.1 223.6" fill="none" stroke="#2e3238" stroke-width="0.8"/><circle cx="69.1" cy="225.39999999999998" r="1.3" fill="#e02020"/><circle cx="65.1" cy="229.39999999999998" r="2.1" fill="#fff" stroke="#c83030" stroke-width="1"/><rect x="35.3" y="237.10000000000002" width="7.4" height="7.4" fill="#fdfdfd" stroke="#9aa4b6" stroke-width="0.8"/><path d="M36.8 240.8H41.2" stroke="#27408b" stroke-width="1"/><path d="M47.3 237.4H49.9V242.4H54.1V239.8H57.5M49.9 242.4V245.20000000000002M54.1 242.4V245.20000000000002" stroke="#1a1a1a" stroke-width="1.4" fill="none"/><rect x="49.3" y="249.7" width="7.4" height="7.4" fill="#fdfdfd" stroke="#9aa4b6" stroke-width="0.8"/><path d="M50.8 253.39999999999998H55.2M53 251.2V255.59999999999997" stroke="#27408b" stroke-width="1"/><path d="M61.3 250.79999999999998L63.5 248.79999999999998L71.1 248.79999999999998L71.1 255.99999999999997L68.9 258.0L61.3 258.0Z" fill="#eef2f6" stroke="#2e3238" stroke-width="0.9" stroke-linejoin="round"/><path d="M61.3 250.79999999999998H68.9V258.0M68.9 250.79999999999998L71.1 248.79999999999998" fill="none" stroke="#2e3238" stroke-width="0.8"/><path d="M61.5 250.79999999999998L63.5 248.89999999999998L70.9 248.89999999999998L68.9 250.79999999999998Z" fill="#e03030"/><path d="M61.3 250.99999999999997H68.9" stroke="#d02020" stroke-width="1.2"/><circle cx="65.1" cy="254.59999999999997" r="2.1" fill="#fff" stroke="#c83030" stroke-width="1"/></svg><div class="a" style="left:13.5px;top:0.5px;width:41px;height:11.8px;background:#3399ff"></div><span class="t" style="left:15.00px;top:1.21px;font-size:9.3px;line-height:11px;color:#fff;transform:scaleX(1.0070);">Shaft.grb</span><span class="t" style="left:29.70px;top:13.81px;font-size:9.3px;line-height:11px;color:#111;transform:scaleX(0.9576);">Materials : 1</span><span class="t" style="left:29.70px;top:26.41px;font-size:9.3px;line-height:11px;color:#111;transform:scaleX(0.9674);">3D Construction</span><span class="t" style="left:29.70px;top:39.01px;font-size:9.3px;line-height:11px;color:#111;">Operations</span><span class="t" style="left:29.70px;top:51.61px;font-size:9.3px;line-height:11px;color:#111;transform:scaleX(0.9874);">Geometric entities</span><span class="t" style="left:29.70px;top:64.21px;font-size:9.3px;line-height:11px;color:#111;">Body_0</span><span class="t" style="left:43.60px;top:76.81px;font-size:9.3px;line-height:11px;color:#3d9be9;transform:scaleX(0.9671);">Rotation_1</span><span class="t" style="left:57.50px;top:89.41px;font-size:9.3px;line-height:11px;color:#111;transform:scaleX(0.9808);">Profile_0</span><span class="t" style="left:57.50px;top:102.01px;font-size:9.3px;line-height:11px;color:#111;transform:scaleX(0.9730);">Vertex_16 : Profile_0</span><span class="t" style="left:57.50px;top:114.61px;font-size:9.3px;line-height:11px;color:#111;transform:scaleX(0.9730);">Vertex_17 : Profile_0</span><span class="t" style="left:43.60px;top:127.21px;font-size:9.3px;line-height:11px;color:#111;transform:scaleX(0.9871);">Groove_1 (&lt;Smart fragment&gt;Groove</span><span class="t" style="left:57.50px;top:139.81px;font-size:9.3px;line-height:11px;color:#3d9be9;transform:scaleX(0.9789);">Edge_1 : Rotation_1</span></div>
<div class="a" style="left:19px;top:396.5px;width:187px;height:13.5px;background:#f0f0f0"></div>
<div class="a" style="left:34px;top:396.5px;width:135px;height:13.5px;background:#cdcdcd"></div>
<svg style="left:19px;top:396px" width="187" height="14"><path d="M8 3.5L4.5 7L8 10.5M179 3.5L182.5 7L179 10.5" fill="none" stroke="#444" stroke-width="1.4"/></svg>
<div class="a" style="left:18.5px;top:411.5px;width:47.8px;height:18px;background:#fff;border:1px solid #dadada;border-top-color:#e8e8e8"></div><div class="a" style="left:66.6px;top:412.8px;width:44.0px;height:15.6px;background:#f1f1f1;border:1px solid #cfcfcf;border-top-color:#e2e2e2"></div><div class="a" style="left:110.9px;top:412.8px;width:44.69999999999999px;height:15.6px;background:#f1f1f1;border:1px solid #cfcfcf;border-top-color:#e2e2e2"></div><div class="a" style="left:156.6px;top:412.8px;width:43.30000000000001px;height:15.6px;background:#f1f1f1;border:1px solid #cfcfcf;border-top-color:#e2e2e2"></div><svg style="left:0;top:0" width="210" height="440"><path d="M24.6 417.5V424.2H28M24.6 420.5H28" stroke="#777" stroke-width="0.9" fill="none"/><ellipse cx="24.6" cy="416.6" rx="2.5" ry="2" fill="#2f7fc8" stroke="#185a9a" stroke-width="0.6" transform="rotate(-25 24.6 416.6)"/><circle cx="24.1" cy="416.20000000000005" r="0.8" fill="#bfe2ff"/><ellipse cx="29.6" cy="419.2" rx="2.5" ry="2" fill="#2f7fc8" stroke="#185a9a" stroke-width="0.6" transform="rotate(-25 29.6 419.2)"/><circle cx="29.1" cy="418.8" r="0.8" fill="#bfe2ff"/><ellipse cx="29.6" cy="424.3" rx="2.5" ry="2" fill="#2f7fc8" stroke="#185a9a" stroke-width="0.6" transform="rotate(-25 29.6 424.3)"/><circle cx="29.1" cy="423.90000000000003" r="0.8" fill="#bfe2ff"/><path d="M69 418.2Q69 416 71.2 416H77Q79.3 416 79.3 418.2V421.6Q79.3 423.6 77 423.6H71.2Q69 423.6 69 421.6Z" fill="#f2cf4a" stroke="#9a7a12" stroke-width="0.9"/><path d="M69.2 419.6H79.2M74.2 416.2V423.4" stroke="#8a6a10" stroke-width="0.9"/><path d="M70.2 417.6H73M75.4 417.6H78.2" stroke="#fff6c0" stroke-width="0.8"/><rect x="114.4" y="418.4" width="8.8" height="7.2" fill="#e9f1fb" stroke="#4a7cc0" stroke-width="0.9"/><rect x="114.4" y="418.4" width="8.8" height="2.2" fill="#4a86d0"/><path d="M117.4 420.6V425.6M114.4 423H123.2" stroke="#7fa6da" stroke-width="0.7"/><path d="M118.6 418.2Q120.4 415.4 123 415.8L122.6 414.4L126 416.4L123 418.4L123.2 417.2Q121.2 417 120.2 418.8Z" fill="#e89420" stroke="#b06a10" stroke-width="0.4"/><path d="M160 418.4L162.2 415.6H170.6V423.4L168.4 426H160Z" fill="#2f7fc8" stroke="#184a86" stroke-width="0.9" stroke-linejoin="round"/><rect x="162.2" y="417" width="6.2" height="6" rx="0.8" fill="#f4ea6a" stroke="#e8f4ff" stroke-width="0.6"/></svg><span class="t" style="left:35.50px;top:414.42px;font-size:10.8px;line-height:13px;color:#111;transform:scaleX(0.8447);">3D ...</span><span class="t" style="left:81.80px;top:414.42px;font-size:10.8px;line-height:13px;color:#111;transform:scaleX(0.9087);">Libr...</span><span class="t" style="left:127.80px;top:414.42px;font-size:10.8px;line-height:13px;color:#111;transform:scaleX(0.8292);">Pro...</span><span class="t" style="left:173.00px;top:414.42px;font-size:10.8px;line-height:13px;color:#111;transform:scaleX(0.9073);">Mat...</span>
<div class="a" style="left:19px;top:434px;width:187px;height:20.5px;background:#bfcddb"></div>
<span class="t" style="left:21.60px;top:436.45px;font-size:13.2px;line-height:16px;color:#000;transform:scaleX(1.0121);">Variables</span>
<svg style="left:186.2px;top:439.79999999999995px" width="18" height="9" viewBox="0 0 18 9"><path d="M1 0.5H4.6M1.7 0.5V4.2M4 0.5V4.2M3.3 0.5V4.2M0.2 4.4H5.4M2.8 4.4V7.6" stroke="#1a1a1a" stroke-width="0.9" fill="none"/><path d="M11 1.2L15.8 6M15.8 1.2L11 6" stroke="#1a1a1a" stroke-width="1.4" fill="none"/></svg>
<div class="a" style="left:19px;top:454.5px;width:187px;height:210px;background:#fff"></div>
<div class="a" style="left:19px;top:454.5px;width:187px;height:19px;background:linear-gradient(#ffffff,#f3f4f6);border-bottom:1px solid #d8d8d8"></div><div class="a" style="left:31.5px;top:455px;width:1px;height:18px;background:#dcdcdc"></div><div class="a" style="left:43.2px;top:455px;width:1px;height:18px;background:#dcdcdc"></div><div class="a" style="left:100.6px;top:455px;width:1px;height:18px;background:#dcdcdc"></div><div class="a" style="left:145.5px;top:455px;width:1px;height:18px;background:#dcdcdc"></div><div class="a" style="left:191.9px;top:455px;width:1px;height:18px;background:#dcdcdc"></div><svg style="left:0;top:0" width="210" height="480"><path d="M22.6 459.4V469.4" stroke="#9a9a9a" stroke-width="1.1"/><path d="M23.2 459.8H27.6V465H23.2Z" fill="#bcbcbc" stroke="#9a9a9a" stroke-width="0.6"/><path d="M198.8 459.2L204 468.8H193.6Z" fill="#8e8e8e" stroke="#5a5a5a" stroke-width="0.9" stroke-linejoin="round"/><path d="M198.8 462.4V466" stroke="#111" stroke-width="1.3"/><rect x="198.15" y="466.8" width="1.3" height="1.2" fill="#111"/></svg><span class="t" style="left:35.60px;top:458.12px;font-size:10.3px;line-height:12px;color:#222;transform:scaleX(0.5936);">?</span><span class="t" style="left:46.10px;top:458.12px;font-size:10.3px;line-height:12px;color:#222;">Name</span><span class="t" style="left:103.00px;top:458.12px;font-size:10.3px;line-height:12px;color:#222;transform:scaleX(0.9618);">Value</span><span class="t" style="left:148.80px;top:458.12px;font-size:10.3px;line-height:12px;color:#222;transform:scaleX(0.9355);">Comm...</span>
<span class="t" style="left:84.00px;top:478.11px;font-size:9.2px;line-height:11px;color:#222;transform:scaleX(1.0580);">No Variables</span>
<div class="a" style="left:206px;top:88.8px;width:26px;height:577.2px;background:linear-gradient(90deg,#f1f1f4,#fafafd 22%,#eff0f7 50%,#d3d7e5);border-radius:3px 3px 0 0"></div>
<div class="a" style="left:212.4px;top:91.2px;width:1.2px;height:1.2px;background:#a0a6ba"></div>
<div class="a" style="left:214.8px;top:91.2px;width:1.2px;height:1.2px;background:#a0a6ba"></div>
<div class="a" style="left:217.20000000000002px;top:91.2px;width:1.2px;height:1.2px;background:#a0a6ba"></div>
<div class="a" style="left:219.6px;top:91.2px;width:1.2px;height:1.2px;background:#a0a6ba"></div>
<div class="a" style="left:222.0px;top:91.2px;width:1.2px;height:1.2px;background:#a0a6ba"></div>
<div class="a" style="left:224.4px;top:91.2px;width:1.2px;height:1.2px;background:#a0a6ba"></div>
<div class="a" style="left:226.8px;top:91.2px;width:1.2px;height:1.2px;background:#a0a6ba"></div>
<div class="a" style="left:232px;top:87px;width:640px;height:578px;background:#e9edf7"></div>
<svg style="left:0;top:0" width="896" height="110"><defs><linearGradient id="dtg" x1="0" y1="0" x2="0" y2="1"><stop offset="0" stop-color="#ffffff"/><stop offset="0.5" stop-color="#f3f7fd"/><stop offset="1" stop-color="#dfeaf8"/></linearGradient></defs><path d="M233.4 104.6L237.6 103.6L251.6 90.4Q252.6 89.6 254 89.6H324.4Q327.4 89.6 327.4 92.6V104.6Z" fill="url(#dtg)" stroke="#b4cfea" stroke-width="1"/><path d="M254.5 97.39999999999999L256.7 96.0L257.9 95.0L260.1 95.39999999999999L260.7 96.39999999999999L263.0 96.0L265.5 95.69999999999999" stroke="#111" stroke-width="1.7" fill="none" stroke-linecap="round" opacity="0.85"/><path d="M255.7 98.39999999999999L259.5 97.5" stroke="#111" stroke-width="0.9" opacity="0.6"/><path d="M317 93.8L322.6 99.4M322.6 93.8L317 99.4" stroke="#222" stroke-width="1.3"/></svg><span class="t" style="left:267.00px;top:90.63px;font-size:11.2px;line-height:13px;color:#0a0a0a;font-weight:bold;transform:scaleX(0.9156);">Shaft.grb</span>
<div class="a" style="left:233px;top:104px;width:639px;height:562px;background:#c5dcf6;border-radius:2px"></div>
<div class="a" style="left:235px;top:106.3px;width:635.3px;height:557.7px;background:#7f9bb9"></div>

<div class="a" style="left:235.6px;top:107px;width:619.4px;height:541.5px;background:linear-gradient(#6699ff,#ffffff);overflow:hidden"><svg style="left:-235.6px;top:-107px" width="896" height="683"><defs><linearGradient id="g1" gradientUnits="userSpaceOnUse" x1="140.1" y1="160.3" x2="99.9" y2="256.2"><stop offset="0.000" stop-color="#39403f"/><stop offset="0.068" stop-color="#555f5e"/><stop offset="0.143" stop-color="#667271"/><stop offset="0.218" stop-color="#73807f"/><stop offset="0.293" stop-color="#7d8b8a"/><stop offset="0.368" stop-color="#82918f"/><stop offset="0.443" stop-color="#849391"/><stop offset="0.508" stop-color="#808f8d"/><stop offset="0.635" stop-color="#748180"/><stop offset="0.766" stop-color="#5e6968"/><stop offset="0.883" stop-color="#464e4d"/><stop offset="0.953" stop-color="#323837"/><stop offset="1.000" stop-color="#212625"/></linearGradient><linearGradient id="g2" gradientUnits="userSpaceOnUse" x1="333.9" y1="210.9" x2="272.1" y2="358.6"><stop offset="0.000" stop-color="#39403f"/><stop offset="0.068" stop-color="#555f5e"/><stop offset="0.143" stop-color="#667271"/><stop offset="0.218" stop-color="#73807f"/><stop offset="0.293" stop-color="#7d8b8a"/><stop offset="0.368" stop-color="#82918f"/><stop offset="0.443" stop-color="#849391"/><stop offset="0.508" stop-color="#808f8d"/><stop offset="0.635" stop-color="#748180"/><stop offset="0.766" stop-color="#5e6968"/><stop offset="0.883" stop-color="#464e4d"/><stop offset="0.953" stop-color="#323837"/><stop offset="1.000" stop-color="#212625"/></linearGradient><linearGradient id="g3" gradientUnits="userSpaceOnUse" x1="399.8" y1="218.5" x2="323.8" y2="400.2"><stop offset="0.000" stop-color="#39403f"/><stop offset="0.068" stop-color="#555f5e"/><stop offset="0.143" stop-color="#667271"/><stop offset="0.218" stop-color="#73807f"/><stop offset="0.293" stop-color="#7d8b8a"/><stop offset="0.368" stop-color="#82918f"/><stop offset="0.443" stop-color="#849391"/><stop offset="0.508" stop-color="#808f8d"/><stop offset="0.635" stop-color="#748180"/><stop offset="0.766" stop-color="#5e6968"/><stop offset="0.883" stop-color="#464e4d"/><stop offset="0.953" stop-color="#323837"/><stop offset="1.000" stop-color="#212625"/></linearGradient><linearGradient id="hlg" gradientUnits="userSpaceOnUse" x1="0" y1="285" x2="0" y2="405"><stop offset="0" stop-color="#fff" stop-opacity="0.85"/><stop offset="0.6" stop-color="#fff" stop-opacity="0.55"/><stop offset="1" stop-color="#fff" stop-opacity="0"/></linearGradient><linearGradient id="g4" gradientUnits="userSpaceOnUse" x1="514.8" y1="292.0" x2="457.0" y2="430.4"><stop offset="0.000" stop-color="#39403f"/><stop offset="0.068" stop-color="#555f5e"/><stop offset="0.143" stop-color="#667271"/><stop offset="0.218" stop-color="#73807f"/><stop offset="0.293" stop-color="#7d8b8a"/><stop offset="0.368" stop-color="#82918f"/><stop offset="0.443" stop-color="#849391"/><stop offset="0.508" stop-color="#808f8d"/><stop offset="0.635" stop-color="#748180"/><stop offset="0.766" stop-color="#5e6968"/><stop offset="0.883" stop-color="#464e4d"/><stop offset="0.953" stop-color="#323837"/><stop offset="1.000" stop-color="#212625"/></linearGradient><linearGradient id="g5" gradientUnits="userSpaceOnUse" x1="604.7" y1="355.6" x2="565.3" y2="449.7"><stop offset="0.000" stop-color="#39403f"/><stop offset="0.068" stop-color="#555f5e"/><stop offset="0.143" stop-color="#667271"/><stop offset="0.218" stop-color="#73807f"/><stop offset="0.293" stop-color="#7d8b8a"/><stop offset="0.368" stop-color="#82918f"/><stop offset="0.443" stop-color="#849391"/><stop offset="0.508" stop-color="#808f8d"/><stop offset="0.635" stop-color="#748180"/><stop offset="0.766" stop-color="#5e6968"/><stop offset="0.883" stop-color="#464e4d"/><stop offset="0.953" stop-color="#323837"/><stop offset="1.000" stop-color="#212625"/></linearGradient><linearGradient id="g6" gradientUnits="userSpaceOnUse" x1="702.6" y1="407.4" x2="671.0" y2="483.0"><stop offset="0.000" stop-color="#39403f"/><stop offset="0.068" stop-color="#555f5e"/><stop offset="0.143" stop-color="#667271"/><stop offset="0.218" stop-color="#73807f"/><stop offset="0.293" stop-color="#7d8b8a"/><stop offset="0.368" stop-color="#82918f"/><stop offset="0.443" stop-color="#849391"/><stop offset="0.508" stop-color="#808f8d"/><stop offset="0.635" stop-color="#748180"/><stop offset="0.766" stop-color="#5e6968"/><stop offset="0.883" stop-color="#464e4d"/><stop offset="0.953" stop-color="#323837"/><stop offset="1.000" stop-color="#212625"/></linearGradient><linearGradient id="g7" gradientUnits="userSpaceOnUse" x1="796.7" y1="460.2" x2="774.7" y2="512.8"><stop offset="0.000" stop-color="#39403f"/><stop offset="0.068" stop-color="#555f5e"/><stop offset="0.143" stop-color="#667271"/><stop offset="0.218" stop-color="#73807f"/><stop offset="0.293" stop-color="#7d8b8a"/><stop offset="0.368" stop-color="#82918f"/><stop offset="0.443" stop-color="#849391"/><stop offset="0.508" stop-color="#808f8d"/><stop offset="0.635" stop-color="#748180"/><stop offset="0.766" stop-color="#5e6968"/><stop offset="0.883" stop-color="#464e4d"/><stop offset="0.953" stop-color="#323837"/><stop offset="1.000" stop-color="#212625"/></linearGradient></defs><path d="M140.1 160.3 L138.5 159.8 L136.9 159.4 L135.2 159.3 L133.4 159.4 L131.6 159.7 L129.7 160.3 L127.8 161.0 L125.9 161.9 L123.9 163.0 L121.9 164.3 L119.9 165.8 L117.9 167.5 L115.9 169.4 L113.9 171.4 L112.0 173.6 L110.1 175.9 L108.2 178.4 L106.4 181.0 L104.6 183.7 L102.9 186.5 L101.3 189.5 L99.8 192.5 L98.3 195.5 L97.0 198.6 L95.7 201.8 L94.6 205.0 L93.5 208.2 L92.6 211.4 L91.7 214.6 L91.0 217.7 L90.5 220.8 L90.0 223.9 L89.7 226.9 L89.5 229.8 L89.5 232.7 L89.5 235.4 L89.7 238.0 L90.1 240.5 L90.5 242.8 L91.1 245.0 L91.8 247.0 L92.7 248.9 L93.6 250.6 L94.7 252.1 L95.8 253.4 L97.1 254.6 L98.5 255.5 L99.9 256.2 L282.9 332.7 L284.5 333.3 L286.1 333.6 L287.8 333.7 L289.6 333.6 L291.4 333.3 L293.3 332.8 L295.2 332.0 L297.1 331.1 L299.1 330.0 L301.1 328.7 L303.1 327.2 L305.1 325.5 L307.1 323.6 L309.1 321.6 L311.0 319.4 L312.9 317.1 L314.8 314.6 L316.6 312.0 L318.4 309.3 L320.1 306.5 L321.7 303.6 L323.2 300.6 L324.7 297.5 L326.0 294.4 L327.3 291.2 L328.4 288.0 L329.5 284.8 L330.4 281.6 L331.3 278.4 L332.0 275.3 L332.5 272.2 L333.0 269.1 L333.3 266.1 L333.5 263.2 L333.5 260.4 L333.5 257.6 L333.3 255.0 L332.9 252.6 L332.5 250.2 L331.9 248.0 L331.2 246.0 L330.3 244.1 L329.4 242.4 L328.3 240.9 L327.2 239.6 L325.9 238.4 L324.5 237.5 L323.1 236.8Z" fill="url(#g1)" stroke="#141a1a" stroke-width="1.15" stroke-linejoin="round"/><path d="M333.9 210.9 L331.5 210.1 L329.0 209.6 L326.3 209.5 L323.6 209.6 L320.8 210.1 L317.9 210.9 L315.0 212.0 L312.0 213.4 L309.0 215.2 L305.9 217.2 L302.8 219.5 L299.8 222.1 L296.7 225.0 L293.7 228.1 L290.7 231.4 L287.7 235.0 L284.9 238.8 L282.1 242.8 L279.4 247.0 L276.8 251.3 L274.3 255.8 L271.9 260.4 L269.7 265.2 L267.6 269.9 L265.6 274.8 L263.8 279.7 L262.2 284.6 L260.8 289.6 L259.5 294.5 L258.5 299.3 L257.6 304.1 L256.9 308.8 L256.4 313.4 L256.1 317.9 L256.0 322.3 L256.1 326.5 L256.4 330.5 L257.0 334.3 L257.7 337.9 L258.6 341.3 L259.7 344.4 L260.9 347.3 L262.4 349.9 L264.0 352.2 L265.8 354.3 L267.8 356.0 L269.9 357.4 L272.1 358.6 L330.9 383.1 L333.3 384.0 L335.8 384.4 L338.5 384.6 L341.2 384.5 L344.0 384.0 L346.9 383.2 L349.8 382.1 L352.8 380.7 L355.8 378.9 L358.9 376.9 L362.0 374.6 L365.0 372.0 L368.1 369.1 L371.1 366.0 L374.1 362.7 L377.1 359.1 L379.9 355.3 L382.7 351.3 L385.4 347.1 L388.0 342.7 L390.5 338.3 L392.9 333.7 L395.1 328.9 L397.2 324.1 L399.2 319.3 L401.0 314.4 L402.6 309.5 L404.0 304.5 L405.3 299.6 L406.3 294.8 L407.2 290.0 L407.9 285.3 L408.4 280.6 L408.7 276.2 L408.8 271.8 L408.7 267.6 L408.4 263.6 L407.8 259.8 L407.1 256.2 L406.2 252.8 L405.1 249.7 L403.9 246.8 L402.4 244.2 L400.8 241.9 L399.0 239.8 L397.0 238.1 L394.9 236.6 L392.7 235.5Z" fill="url(#g2)" stroke="#141a1a" stroke-width="1.15" stroke-linejoin="round"/><path d="M399.8 218.5 L396.9 217.5 L393.8 216.9 L390.5 216.6 L387.2 216.8 L383.7 217.4 L380.2 218.4 L376.6 219.8 L372.9 221.5 L369.2 223.6 L365.4 226.1 L361.6 229.0 L357.8 232.2 L354.1 235.7 L350.3 239.5 L346.6 243.7 L343.0 248.1 L339.5 252.8 L336.0 257.7 L332.7 262.9 L329.5 268.2 L326.4 273.7 L323.5 279.4 L320.8 285.2 L318.2 291.1 L315.8 297.1 L313.6 303.1 L311.6 309.2 L309.8 315.2 L308.3 321.3 L307.0 327.3 L305.9 333.2 L305.0 339.0 L304.4 344.7 L304.1 350.2 L304.0 355.5 L304.1 360.7 L304.5 365.6 L305.1 370.3 L306.0 374.8 L307.1 378.9 L308.4 382.8 L310.0 386.3 L311.8 389.5 L313.8 392.4 L316.0 394.9 L318.4 397.1 L321.0 398.8 L323.8 400.2 L441.1 449.2 L444.0 450.2 L447.1 450.8 L450.4 451.1 L453.7 450.9 L457.2 450.3 L460.7 449.3 L464.3 447.9 L468.0 446.2 L471.7 444.1 L475.5 441.6 L479.3 438.7 L483.1 435.5 L486.8 432.0 L490.6 428.2 L494.3 424.0 L497.9 419.6 L501.4 414.9 L504.9 410.0 L508.2 404.8 L511.4 399.5 L514.5 394.0 L517.4 388.3 L520.1 382.5 L522.7 376.6 L525.1 370.6 L527.3 364.6 L529.3 358.5 L531.1 352.5 L532.6 346.4 L533.9 340.4 L535.0 334.5 L535.9 328.7 L536.5 323.0 L536.8 317.5 L536.9 312.2 L536.8 307.0 L536.4 302.1 L535.8 297.4 L534.9 292.9 L533.8 288.8 L532.5 284.9 L530.9 281.4 L529.1 278.2 L527.1 275.3 L524.9 272.8 L522.5 270.6 L519.9 268.9 L517.1 267.5Z" fill="url(#g3)" stroke="#141a1a" stroke-width="1.15" stroke-linejoin="round"/><path d="M441.1 449.2 L444.0 450.2 L447.1 450.8 L450.4 451.1 L453.7 450.9 L457.2 450.3 L460.7 449.3 L464.3 447.9 L468.0 446.2 L471.7 444.1 L475.5 441.6 L479.3 438.7 L483.1 435.5 L486.8 432.0 L490.6 428.2 L494.3 424.0 L497.9 419.6 L501.4 414.9 L504.9 410.0 L508.2 404.8 L511.4 399.5 L514.5 394.0 L517.4 388.3 L520.1 382.5 L522.7 376.6 L525.1 370.6 L527.3 364.6 L529.3 358.5 L531.1 352.5 L532.6 346.4 L533.9 340.4 L535.0 334.5 L535.9 328.7 L536.5 323.0 L536.8 317.5 L536.9 312.2 L536.8 307.0 L536.4 302.1 L535.8 297.4 L534.9 292.9 L533.8 288.8 L532.5 284.9 L530.9 281.4 L529.1 278.2 L527.1 275.3 L524.9 272.8 L522.5 270.6 L519.9 268.9 L517.1 267.5 L514.2 266.5 L511.1 265.9 L507.8 265.7 L504.5 265.9 L501.0 266.4 L497.5 267.4 L493.9 268.8 L490.2 270.5 L486.5 272.7 L482.7 275.2 L478.9 278.0 L475.1 281.2 L471.4 284.7 L467.6 288.6 L463.9 292.7 L460.3 297.1 L456.8 301.8 L453.3 306.7 L450.0 311.9 L446.8 317.2 L443.7 322.8 L440.8 328.4 L438.1 334.2 L435.5 340.1 L433.1 346.1 L430.9 352.1 L428.9 358.2 L427.1 364.3 L425.6 370.3 L424.3 376.3 L423.2 382.2 L422.3 388.0 L421.7 393.7 L421.4 399.2 L421.3 404.6 L421.4 409.7 L421.8 414.7 L422.4 419.4 L423.3 423.8 L424.4 428.0 L425.7 431.8 L427.3 435.4 L429.1 438.6 L431.1 441.4 L433.3 443.9 L435.7 446.1 L438.3 447.9 L441.1 449.2Z" fill="#6f7e7d" stroke="#141a1a" stroke-width="0.9"/><path d="M449.6 429.0 L451.8 429.8 L454.2 430.3 L456.7 430.4 L459.3 430.3 L462.0 429.8 L464.8 429.1 L467.6 428.0 L470.5 426.7 L473.4 425.0 L476.3 423.1 L479.3 420.9 L482.2 418.4 L485.1 415.6 L488.0 412.6 L490.9 409.4 L493.7 406.0 L496.5 402.3 L499.1 398.5 L501.7 394.5 L504.2 390.4 L506.6 386.1 L508.9 381.6 L511.0 377.1 L513.0 372.5 L514.9 367.9 L516.6 363.2 L518.1 358.5 L519.5 353.8 L520.7 349.1 L521.7 344.4 L522.6 339.8 L523.2 335.3 L523.7 330.9 L524.0 326.6 L524.1 322.4 L524.0 318.4 L523.7 314.6 L523.2 310.9 L522.5 307.5 L521.6 304.3 L520.6 301.3 L519.4 298.5 L518.0 296.0 L516.4 293.8 L514.7 291.8 L512.8 290.1 L510.8 288.8 L508.6 287.7 L506.4 286.9 L504.0 286.4 L501.5 286.3 L498.9 286.4 L496.2 286.9 L493.4 287.6 L490.6 288.7 L487.7 290.1 L484.8 291.7 L481.9 293.7 L478.9 295.9 L476.0 298.4 L473.1 301.1 L470.2 304.1 L467.3 307.3 L464.5 310.7 L461.7 314.4 L459.1 318.2 L456.5 322.2 L454.0 326.4 L451.6 330.7 L449.3 335.1 L447.2 339.6 L445.2 344.2 L443.3 348.8 L441.6 353.5 L440.1 358.2 L438.7 363.0 L437.5 367.7 L436.5 372.3 L435.6 376.9 L435.0 381.4 L434.5 385.8 L434.2 390.1 L434.1 394.3 L434.2 398.3 L434.5 402.2 L435.0 405.8 L435.7 409.3 L436.6 412.5 L437.6 415.5 L438.8 418.2 L440.2 420.7 L441.8 423.0 L443.5 424.9 L445.4 426.6 L447.4 428.0 L449.6 429.0Z" fill="#7f8c8b"/><path d="M450.4 427.6 L452.6 428.4 L455.0 428.9 L457.4 429.0 L460.0 428.9 L462.6 428.4 L465.3 427.7 L468.0 426.7 L470.9 425.3 L473.7 423.7 L476.6 421.8 L479.5 419.6 L482.3 417.2 L485.2 414.5 L488.0 411.6 L490.8 408.4 L493.6 405.1 L496.3 401.5 L498.9 397.8 L501.5 393.8 L503.9 389.8 L506.2 385.6 L508.5 381.2 L510.6 376.8 L512.5 372.3 L514.3 367.8 L516.0 363.2 L517.5 358.6 L518.9 354.0 L520.0 349.4 L521.1 344.8 L521.9 340.3 L522.5 335.9 L523.0 331.5 L523.3 327.3 L523.3 323.3 L523.2 319.3 L522.9 315.6 L522.5 312.0 L521.8 308.6 L521.0 305.5 L519.9 302.5 L518.7 299.8 L517.4 297.4 L515.8 295.2 L514.1 293.3 L512.3 291.7 L510.3 290.3 L508.2 289.3 L506.0 288.5 L503.6 288.0 L501.2 287.9 L498.6 288.0 L496.0 288.5 L493.3 289.2 L490.6 290.2 L487.7 291.6 L484.9 293.2 L482.0 295.1 L479.1 297.3 L476.3 299.7 L473.4 302.4 L470.6 305.3 L467.8 308.5 L465.0 311.8 L462.3 315.4 L459.7 319.1 L457.1 323.1 L454.7 327.1 L452.4 331.3 L450.1 335.7 L448.0 340.1 L446.1 344.6 L444.3 349.1 L442.6 353.7 L441.1 358.3 L439.7 362.9 L438.6 367.5 L437.5 372.1 L436.7 376.6 L436.1 381.0 L435.6 385.3 L435.3 389.6 L435.3 393.6 L435.4 397.6 L435.7 401.3 L436.1 404.9 L436.8 408.3 L437.6 411.4 L438.7 414.4 L439.9 417.1 L441.2 419.5 L442.8 421.7 L444.5 423.6 L446.3 425.2 L448.3 426.6 L450.4 427.6Z" fill="#6f7d7c" stroke="#354040" stroke-width="1"/><path d="M453.0 428.7 L455.2 429.5 L457.6 430.0 L460.0 430.1 L462.6 430.0 L465.2 429.5 L467.9 428.8 L470.6 427.7 L473.5 426.4 L476.3 424.8 L479.2 422.9 L482.1 420.7 L484.9 418.3 L487.8 415.6 L490.6 412.7 L493.4 409.5 L496.2 406.2 L498.9 402.6 L501.5 398.8 L504.1 394.9 L506.5 390.9 L508.8 386.7 L511.1 382.3 L513.2 377.9 L515.1 373.4 L516.9 368.9 L518.6 364.3 L520.1 359.7 L521.5 355.0 L522.6 350.4 L523.7 345.9 L524.5 341.4 L525.1 337.0 L525.6 332.6 L525.9 328.4 L525.9 324.3 L525.8 320.4 L525.5 316.7 L525.1 313.1 L524.4 309.7 L523.6 306.6 L522.5 303.6 L521.3 300.9 L520.0 298.5 L518.4 296.3 L516.7 294.4 L514.9 292.7 L512.9 291.4 L510.8 290.3 L508.6 289.6 L506.2 289.1 L503.8 289.0 L501.2 289.1 L498.6 289.5 L495.9 290.3 L493.2 291.3 L490.3 292.7 L487.5 294.3 L484.6 296.2 L481.7 298.4 L478.9 300.8 L476.0 303.5 L473.2 306.4 L470.4 309.5 L467.6 312.9 L464.9 316.5 L462.3 320.2 L459.7 324.1 L457.3 328.2 L455.0 332.4 L452.7 336.7 L450.6 341.2 L448.7 345.7 L446.9 350.2 L445.2 354.8 L443.7 359.4 L442.3 364.0 L441.2 368.6 L440.1 373.2 L439.3 377.7 L438.7 382.1 L438.2 386.4 L437.9 390.6 L437.9 394.7 L438.0 398.6 L438.3 402.4 L438.7 406.0 L439.4 409.4 L440.2 412.5 L441.3 415.5 L442.5 418.2 L443.8 420.6 L445.4 422.8 L447.1 424.7 L448.9 426.3 L450.9 427.7 L453.0 428.7Z" fill="#5b6666" stroke="#1a2222" stroke-width="1.2"/><path d="M507.5 289.1 L505.8 288.7 L504.1 288.5 L502.3 288.5 L500.5 288.6 L498.6 288.8 L496.7 289.2 L494.7 289.8 L492.7 290.5 L490.7 291.4 L488.7 292.4 L486.6 293.6 L484.6 294.9 L482.5 296.3 L480.4 297.9 L478.4 299.7 L476.3 301.5 L474.2 303.5 L472.2 305.7 L470.2 307.9 L468.2 310.2 L466.2 312.7 L464.2 315.2 L462.3 317.9 L460.5 320.7 L458.6 323.5 L456.9 326.4 L455.2 329.4 L453.5 332.4 L451.9 335.5 L450.4 338.7 L448.9 341.9 L447.5 345.2 L446.2 348.4 L444.9 351.7 L443.7 355.0 L442.7 358.4 L441.7 361.7 L440.7 365.0 L439.9 368.3 L439.2 371.6" fill="none" stroke="url(#hlg)" stroke-width="0.85"/><path d="M514.8 292.0 L512.6 291.3 L510.2 290.8 L507.8 290.6 L505.2 290.8 L502.6 291.2 L499.9 292.0 L497.2 293.0 L494.3 294.3 L491.5 296.0 L488.6 297.9 L485.7 300.0 L482.9 302.5 L480.0 305.1 L477.2 308.1 L474.4 311.2 L471.6 314.6 L468.9 318.2 L466.3 321.9 L463.7 325.8 L461.3 329.9 L459.0 334.1 L456.7 338.4 L454.6 342.8 L452.7 347.3 L450.9 351.9 L449.2 356.5 L447.7 361.1 L446.3 365.7 L445.2 370.3 L444.1 374.9 L443.3 379.4 L442.7 383.8 L442.2 388.1 L441.9 392.3 L441.9 396.4 L442.0 400.3 L442.3 404.1 L442.7 407.7 L443.4 411.0 L444.2 414.2 L445.3 417.1 L446.5 419.8 L447.8 422.3 L449.4 424.5 L451.1 426.4 L452.9 428.0 L454.9 429.3 L457.0 430.4 L556.1 471.8 L558.3 472.6 L560.7 473.1 L563.1 473.2 L565.7 473.1 L568.3 472.6 L571.0 471.9 L573.7 470.8 L576.6 469.5 L579.4 467.9 L582.3 466.0 L585.2 463.8 L588.0 461.4 L590.9 458.7 L593.7 455.8 L596.5 452.6 L599.3 449.3 L602.0 445.7 L604.6 441.9 L607.2 438.0 L609.6 434.0 L611.9 429.7 L614.2 425.4 L616.3 421.0 L618.2 416.5 L620.0 412.0 L621.7 407.4 L623.2 402.7 L624.6 398.1 L625.7 393.5 L626.8 389.0 L627.6 384.5 L628.2 380.1 L628.7 375.7 L629.0 371.5 L629.0 367.4 L628.9 363.5 L628.6 359.8 L628.2 356.2 L627.5 352.8 L626.7 349.6 L625.6 346.7 L624.4 344.0 L623.1 341.6 L621.5 339.4 L619.8 337.5 L618.0 335.8 L616.0 334.5 L613.9 333.4Z" fill="url(#g4)" stroke="#141a1a" stroke-width="1.15" stroke-linejoin="round"/><path d="M556.1 471.8 L558.3 472.6 L560.7 473.1 L563.1 473.2 L565.7 473.1 L568.3 472.6 L571.0 471.9 L573.7 470.8 L576.6 469.5 L579.4 467.9 L582.3 466.0 L585.2 463.8 L588.0 461.4 L590.9 458.7 L593.7 455.8 L596.5 452.6 L599.3 449.3 L602.0 445.7 L604.6 441.9 L607.2 438.0 L609.6 434.0 L611.9 429.7 L614.2 425.4 L616.3 421.0 L618.2 416.5 L620.0 412.0 L621.7 407.4 L623.2 402.7 L624.6 398.1 L625.7 393.5 L626.8 389.0 L627.6 384.5 L628.2 380.1 L628.7 375.7 L629.0 371.5 L629.0 367.4 L628.9 363.5 L628.6 359.8 L628.2 356.2 L627.5 352.8 L626.7 349.6 L625.6 346.7 L624.4 344.0 L623.1 341.6 L621.5 339.4 L619.8 337.5 L618.0 335.8 L616.0 334.5 L613.9 333.4 L611.7 332.7 L609.3 332.2 L606.9 332.1 L604.3 332.2 L601.7 332.6 L599.0 333.4 L596.3 334.4 L593.4 335.8 L590.6 337.4 L587.7 339.3 L584.8 341.5 L582.0 343.9 L579.1 346.6 L576.3 349.5 L573.5 352.6 L570.7 356.0 L568.0 359.6 L565.4 363.3 L562.8 367.2 L560.4 371.3 L558.1 375.5 L555.8 379.8 L553.7 384.3 L551.8 388.7 L550.0 393.3 L548.3 397.9 L546.8 402.5 L545.4 407.1 L544.3 411.7 L543.2 416.3 L542.4 420.8 L541.8 425.2 L541.3 429.5 L541.0 433.7 L541.0 437.8 L541.1 441.7 L541.4 445.5 L541.8 449.1 L542.5 452.5 L543.3 455.6 L544.4 458.6 L545.6 461.2 L546.9 463.7 L548.5 465.9 L550.2 467.8 L552.0 469.4 L554.0 470.8 L556.1 471.8Z" fill="#6f7e7d" stroke="#141a1a" stroke-width="0.9"/><path d="M604.7 355.6 L603.1 355.1 L601.6 354.7 L599.9 354.6 L598.2 354.7 L596.4 355.0 L594.5 355.5 L592.7 356.3 L590.7 357.2 L588.8 358.3 L586.9 359.6 L584.9 361.0 L582.9 362.7 L581.0 364.5 L579.1 366.5 L577.1 368.6 L575.3 370.9 L573.4 373.4 L571.7 375.9 L569.9 378.6 L568.3 381.3 L566.7 384.2 L565.2 387.1 L563.7 390.1 L562.4 393.2 L561.2 396.3 L560.0 399.4 L559.0 402.6 L558.1 405.7 L557.3 408.8 L556.6 411.9 L556.0 415.0 L555.6 418.0 L555.3 420.9 L555.1 423.8 L555.1 426.6 L555.1 429.2 L555.3 431.8 L555.6 434.2 L556.1 436.5 L556.7 438.7 L557.4 440.7 L558.2 442.5 L559.1 444.2 L560.2 445.6 L561.3 446.9 L562.6 448.1 L563.9 449.0 L565.3 449.7 L667.1 492.2 L668.7 492.8 L670.2 493.1 L671.9 493.2 L673.6 493.1 L675.4 492.8 L677.3 492.3 L679.1 491.6 L681.1 490.7 L683.0 489.6 L684.9 488.3 L686.9 486.8 L688.9 485.1 L690.8 483.3 L692.7 481.3 L694.7 479.2 L696.5 476.9 L698.4 474.5 L700.1 471.9 L701.9 469.2 L703.5 466.5 L705.1 463.6 L706.6 460.7 L708.1 457.7 L709.4 454.6 L710.6 451.5 L711.8 448.4 L712.8 445.3 L713.7 442.1 L714.5 439.0 L715.2 435.9 L715.8 432.8 L716.2 429.8 L716.5 426.9 L716.7 424.0 L716.7 421.3 L716.7 418.6 L716.5 416.0 L716.2 413.6 L715.7 411.3 L715.1 409.2 L714.4 407.2 L713.6 405.3 L712.7 403.7 L711.6 402.2 L710.5 400.9 L709.2 399.8 L707.9 398.8 L706.5 398.1Z" fill="url(#g5)" stroke="#141a1a" stroke-width="1.15" stroke-linejoin="round"/><path d="M667.1 492.2 L668.7 492.8 L670.2 493.1 L671.9 493.2 L673.6 493.1 L675.4 492.8 L677.3 492.3 L679.1 491.6 L681.1 490.7 L683.0 489.6 L684.9 488.3 L686.9 486.8 L688.9 485.1 L690.8 483.3 L692.7 481.3 L694.7 479.2 L696.5 476.9 L698.4 474.5 L700.1 471.9 L701.9 469.2 L703.5 466.5 L705.1 463.6 L706.6 460.7 L708.1 457.7 L709.4 454.6 L710.6 451.5 L711.8 448.4 L712.8 445.3 L713.7 442.1 L714.5 439.0 L715.2 435.9 L715.8 432.8 L716.2 429.8 L716.5 426.9 L716.7 424.0 L716.7 421.3 L716.7 418.6 L716.5 416.0 L716.2 413.6 L715.7 411.3 L715.1 409.2 L714.4 407.2 L713.6 405.3 L712.7 403.7 L711.6 402.2 L710.5 400.9 L709.2 399.8 L707.9 398.8 L706.5 398.1 L704.9 397.6 L703.4 397.3 L701.7 397.2 L700.0 397.3 L698.2 397.6 L696.3 398.1 L694.5 398.8 L692.5 399.7 L690.6 400.8 L688.7 402.1 L686.7 403.6 L684.7 405.2 L682.8 407.1 L680.9 409.0 L678.9 411.2 L677.1 413.5 L675.2 415.9 L673.5 418.5 L671.7 421.1 L670.1 423.9 L668.5 426.7 L667.0 429.7 L665.5 432.7 L664.2 435.7 L663.0 438.8 L661.8 442.0 L660.8 445.1 L659.9 448.2 L659.1 451.4 L658.4 454.5 L657.8 457.5 L657.4 460.5 L657.1 463.5 L656.9 466.3 L656.9 469.1 L656.9 471.8 L657.1 474.3 L657.4 476.8 L657.9 479.1 L658.5 481.2 L659.2 483.2 L660.0 485.0 L660.9 486.7 L662.0 488.2 L663.1 489.5 L664.4 490.6 L665.7 491.5 L667.1 492.2Z" fill="#6f7e7d" stroke="#141a1a" stroke-width="0.9"/><path d="M702.6 407.4 L701.4 406.9 L700.1 406.7 L698.8 406.6 L697.4 406.7 L695.9 406.9 L694.5 407.3 L693.0 407.9 L691.4 408.6 L689.9 409.5 L688.3 410.6 L686.7 411.7 L685.1 413.1 L683.6 414.5 L682.0 416.1 L680.5 417.9 L679.0 419.7 L677.5 421.6 L676.1 423.7 L674.7 425.8 L673.4 428.1 L672.1 430.4 L670.9 432.7 L669.7 435.1 L668.6 437.6 L667.6 440.1 L666.7 442.6 L665.9 445.1 L665.2 447.6 L664.5 450.2 L664.0 452.6 L663.5 455.1 L663.2 457.5 L662.9 459.9 L662.8 462.2 L662.7 464.4 L662.8 466.6 L662.9 468.6 L663.2 470.6 L663.6 472.4 L664.0 474.1 L664.6 475.8 L665.2 477.2 L666.0 478.6 L666.8 479.8 L667.7 480.8 L668.8 481.7 L669.8 482.4 L671.0 483.0 L769.9 524.4 L771.1 524.8 L772.4 525.0 L773.7 525.1 L775.1 525.0 L776.6 524.8 L778.0 524.4 L779.5 523.8 L781.1 523.1 L782.6 522.2 L784.2 521.2 L785.8 520.0 L787.4 518.6 L788.9 517.2 L790.5 515.6 L792.0 513.9 L793.5 512.0 L795.0 510.1 L796.4 508.0 L797.8 505.9 L799.1 503.6 L800.4 501.3 L801.6 499.0 L802.8 496.6 L803.9 494.1 L804.9 491.6 L805.8 489.1 L806.6 486.6 L807.3 484.1 L808.0 481.6 L808.5 479.1 L809.0 476.6 L809.3 474.2 L809.6 471.8 L809.7 469.5 L809.8 467.3 L809.7 465.1 L809.6 463.1 L809.3 461.1 L808.9 459.3 L808.5 457.6 L807.9 456.0 L807.3 454.5 L806.5 453.1 L805.7 451.9 L804.8 450.9 L803.7 450.0 L802.7 449.3 L801.5 448.7Z" fill="url(#g6)" stroke="#141a1a" stroke-width="1.15" stroke-linejoin="round"/><path d="M769.9 524.4 L771.1 524.8 L772.4 525.0 L773.7 525.1 L775.1 525.0 L776.6 524.8 L778.0 524.4 L779.5 523.8 L781.1 523.1 L782.6 522.2 L784.2 521.2 L785.8 520.0 L787.4 518.6 L788.9 517.2 L790.5 515.6 L792.0 513.9 L793.5 512.0 L795.0 510.1 L796.4 508.0 L797.8 505.9 L799.1 503.6 L800.4 501.3 L801.6 499.0 L802.8 496.6 L803.9 494.1 L804.9 491.6 L805.8 489.1 L806.6 486.6 L807.3 484.1 L808.0 481.6 L808.5 479.1 L809.0 476.6 L809.3 474.2 L809.6 471.8 L809.7 469.5 L809.8 467.3 L809.7 465.1 L809.6 463.1 L809.3 461.1 L808.9 459.3 L808.5 457.6 L807.9 456.0 L807.3 454.5 L806.5 453.1 L805.7 451.9 L804.8 450.9 L803.7 450.0 L802.7 449.3 L801.5 448.7 L800.3 448.3 L799.0 448.0 L797.7 447.9 L796.3 448.0 L794.8 448.3 L793.4 448.7 L791.9 449.2 L790.3 450.0 L788.8 450.9 L787.2 451.9 L785.6 453.1 L784.0 454.4 L782.5 455.9 L780.9 457.5 L779.4 459.2 L777.9 461.0 L776.4 463.0 L775.0 465.0 L773.6 467.2 L772.3 469.4 L771.0 471.7 L769.8 474.1 L768.6 476.5 L767.5 478.9 L766.5 481.4 L765.6 483.9 L764.8 486.5 L764.1 489.0 L763.4 491.5 L762.9 494.0 L762.4 496.4 L762.1 498.9 L761.8 501.2 L761.7 503.5 L761.6 505.8 L761.7 507.9 L761.8 510.0 L762.1 511.9 L762.5 513.8 L762.9 515.5 L763.5 517.1 L764.1 518.6 L764.9 519.9 L765.7 521.1 L766.6 522.1 L767.7 523.0 L768.7 523.8 L769.9 524.4Z" fill="#6f7e7d" stroke="#141a1a" stroke-width="0.9"/><path d="M796.7 460.2 L795.8 459.9 L794.9 459.8 L794.0 459.7 L793.1 459.8 L792.1 459.9 L791.0 460.2 L790.0 460.6 L788.9 461.1 L787.8 461.7 L786.7 462.5 L785.6 463.3 L784.5 464.2 L783.5 465.2 L782.4 466.3 L781.3 467.5 L780.3 468.8 L779.2 470.2 L778.2 471.6 L777.3 473.1 L776.4 474.6 L775.5 476.2 L774.6 477.9 L773.8 479.5 L773.1 481.2 L772.4 483.0 L771.8 484.7 L771.2 486.5 L770.7 488.2 L770.2 490.0 L769.8 491.7 L769.5 493.4 L769.3 495.1 L769.1 496.7 L769.0 498.3 L769.0 499.9 L769.0 501.4 L769.1 502.8 L769.3 504.2 L769.5 505.5 L769.9 506.7 L770.3 507.8 L770.7 508.8 L771.2 509.7 L771.8 510.6 L772.5 511.3 L773.2 511.9 L773.9 512.4 L774.7 512.8 L949.0 585.7 L949.9 586.0 L950.8 586.1 L951.7 586.2 L952.6 586.1 L953.6 586.0 L954.7 585.7 L955.7 585.3 L956.8 584.8 L957.9 584.2 L959.0 583.5 L960.1 582.6 L961.2 581.7 L962.2 580.7 L963.3 579.6 L964.4 578.4 L965.4 577.1 L966.5 575.7 L967.5 574.3 L968.4 572.8 L969.3 571.3 L970.2 569.7 L971.1 568.0 L971.9 566.4 L972.6 564.7 L973.3 562.9 L973.9 561.2 L974.5 559.4 L975.0 557.7 L975.5 555.9 L975.9 554.2 L976.2 552.5 L976.4 550.8 L976.6 549.2 L976.7 547.6 L976.7 546.0 L976.7 544.5 L976.6 543.1 L976.4 541.7 L976.2 540.4 L975.8 539.2 L975.4 538.1 L975.0 537.1 L974.5 536.2 L973.9 535.3 L973.2 534.6 L972.5 534.0 L971.8 533.5 L971.0 533.1Z" fill="url(#g7)" stroke="#141a1a" stroke-width="1.15" stroke-linejoin="round"/><path d="M279.5 603.3L272.9 634" stroke="#1a1ab8" stroke-width="2.6"/><path d="M270.2 626.6L277.6 628L272.4 637Z" fill="#10108a"/><path d="M279.5 603.3L296 600" stroke="#15a015" stroke-width="2.4"/><circle cx="294.6" cy="600" r="2.6" fill="#22d022"/><path d="M296.4 597.6L299.8 600L296.6 602.4Z" fill="#0a300a"/><path d="M279.5 603.3L258 594.4" stroke="#b01818" stroke-width="2.6"/><path d="M252.2 591.8L261.6 591.6L258.2 598Z" fill="#5a0a0a"/><path d="M256 593L260.6 592L259 596.4Z" fill="#c02020"/><text x="254" y="603" font-family="Liberation Sans, sans-serif" font-size="6.8" fill="#e05a5a">X</text><text x="295" y="608.6" font-family="Liberation Sans, sans-serif" font-size="7" fill="#28c828">Y</text><text x="265.8" y="628" font-family="Liberation Sans, sans-serif" font-size="7.4" fill="#3030c8">Z</text></svg></div>
<div class="a" style="left:855px;top:107px;width:14.4px;height:556px;background:#f0f0f0"></div>
<div class="a" style="left:855.5px;top:361px;width:13px;height:35px;background:#cdcdcd"></div>
<div class="a" style="left:855px;top:107px;width:14.5px;height:4px;background:#f6f6f6;border-right:1.5px solid #666;border-bottom:1.5px solid #666"></div>
<svg style="left:855px;top:107px" width="15" height="542"><path d="M3.8 13.7L7.3 10.2L10.8 13.7M3.8 532L7.3 535.5L10.8 532" fill="none" stroke="#3c3c3c" stroke-width="1.3"/></svg>
<div class="a" style="left:236px;top:648.5px;width:633.4px;height:14.5px;background:#f0f0f0"></div>
<div class="a" style="left:526px;top:649px;width:42px;height:13.5px;background:#cdcdcd"></div>
<div class="a" style="left:235.6px;top:648.5px;width:3.6px;height:14.5px;background:#f6f6f6;border-right:1.5px solid #5a5a5a;border-bottom:1.5px solid #5a5a5a"></div>
<svg style="left:236px;top:648px" width="634" height="15"><path d="M12.5 4L9 7.5L12.5 11M609 4L612.5 7.5L609 11" fill="none" stroke="#3c3c3c" stroke-width="1.3"/><g fill="#aaa"><rect x="630" y="6" width="1.5" height="1.5"/><rect x="630" y="9" width="1.5" height="1.5"/><rect x="630" y="12" width="1.5" height="1.5"/><rect x="627" y="9" width="1.5" height="1.5"/><rect x="627" y="12" width="1.5" height="1.5"/><rect x="624" y="12" width="1.5" height="1.5"/></g></svg>
<div class="a" style="left:872px;top:87px;width:24px;height:579px;background:#f3f6fb"></div>
<div class="a" style="left:872.5px;top:89px;width:23.5px;height:442px;background:linear-gradient(90deg,#f4f5fb,#e9ecf6 50%,#d9dce9);border-radius:3px 0 0 0"></div>
<div class="a" style="left:872.5px;top:524.5px;width:23.5px;height:6.5px;background:#c6cad8"></div>
<svg style="left:0;top:0" width="896" height="540"><rect x="875.6" y="91" width="1.2" height="1.2" fill="#9aa0b4"/><rect x="878.0" y="91" width="1.2" height="1.2" fill="#9aa0b4"/><rect x="880.4" y="91" width="1.2" height="1.2" fill="#9aa0b4"/><rect x="882.8000000000001" y="91" width="1.2" height="1.2" fill="#9aa0b4"/><rect x="885.2" y="91" width="1.2" height="1.2" fill="#9aa0b4"/><rect x="887.6" y="91" width="1.2" height="1.2" fill="#9aa0b4"/><rect x="890.0" y="91" width="1.2" height="1.2" fill="#9aa0b4"/><rect x="873.8" y="95" width="20.8" height="19.6" rx="1.5" fill="#c3def5" stroke="#6aa6dc" stroke-width="1"/><path d="M882.0 108V102.6A4.4 4.4 0 0 1 890.8 102.6V108" fill="none" stroke="#d23c3c" stroke-width="3.2"/><path d="M882.0 108V102.6A4.4 4.4 0 0 1 886.4 98.2" fill="none" stroke="#2f6fc4" stroke-width="3.2"/><rect x="889.1999999999999" y="106.4" width="3.2" height="2" fill="#f4f4f4"/><rect x="880.4" y="106.4" width="3.2" height="2" fill="#e8eef8"/><path d="M877.6 98V107.6M879.4 110.2H892" stroke="#6a7f9a" stroke-width="1.1" stroke-dasharray="2 1.4" fill="none"/><path d="M875.8000000000001 108.60000000000001L879.4 112.2M879.4 108.60000000000001L875.8000000000001 112.2" stroke="#e01818" stroke-width="1.5"/><path d="M877.6 119V129M879.6 131.6H892" stroke="#6a7f9a" stroke-width="1.1" stroke-dasharray="2 1.4" fill="none"/><path d="M875.8000000000001 129.79999999999998L879.4 133.4M879.4 129.79999999999998L875.8000000000001 133.4" stroke="#e01818" stroke-width="1.5"/><path d="M885.2 119.4H889.2V124.6H885.2Z" fill="#8fb4e4" stroke="#4a7cc0" stroke-width="0.8"/><path d="M883.4 125.2H891M887.2 125.2V130.4" stroke="#3a6cb0" stroke-width="1.2"/><path d="M882.0 150.6V145.2A4.4 4.4 0 0 1 890.8 145.2V150.6" fill="none" stroke="#d23c3c" stroke-width="3.2"/><path d="M882.0 150.6V145.2A4.4 4.4 0 0 1 886.4 140.79999999999998" fill="none" stroke="#2f6fc4" stroke-width="3.2"/><rect x="889.1999999999999" y="149.0" width="3.2" height="2" fill="#f4f4f4"/><rect x="880.4" y="149.0" width="3.2" height="2" fill="#e8eef8"/><path d="M876.4 151L879 154.4L883.6 148.4" stroke="#2aa02a" stroke-width="1.8" fill="none"/><path d="M893 155.2V152.0L889.8 155.2Z" fill="#111"/><path d="M876.4 159.6H891.4" stroke="#b4b9c8" stroke-width="1"/><path d="M886.2 174.2L890.6 178.6" stroke="#d9914a" stroke-width="2.6" stroke-linecap="round"/><circle cx="882.2" cy="170.2" r="5.6" fill="#e8f2fc" stroke="#7a9cc4" stroke-width="1.5"/><rect x="878.6" y="166.4" width="5.6" height="5.6" fill="none" stroke="#d02020" stroke-width="0.9"/><rect x="880.4" y="168.2" width="5" height="4.6" fill="#c8dcf4" stroke="#3a5ca0" stroke-width="0.9"/><rect x="880" y="190.1" width="7.6" height="6.8" fill="#dfe8f8" stroke="#2a3a7a" stroke-width="1.3"/><path d="M876.6 187.1L879.6 189.7" stroke="#2a3a7a" stroke-width="1.2"/><path d="M891 187.1L888 189.7" stroke="#2a3a7a" stroke-width="1.2"/><path d="M876.6 199.89999999999998L879.6 197.29999999999998" stroke="#2a3a7a" stroke-width="1.2"/><path d="M891 199.89999999999998L888 197.29999999999998" stroke="#2a3a7a" stroke-width="1.2"/><path d="M876.4 186.89999999999998H879M876.4 186.89999999999998V189.5M891.2 186.89999999999998H888.6M891.2 186.89999999999998V189.5M876.4 200.1H879M876.4 200.1V197.5M891.2 200.1H888.6M891.2 200.1V197.5" stroke="#2a3a7a" stroke-width="1" fill="none"/><rect x="880" y="211.0" width="7.6" height="6.8" fill="#dfe8f8" stroke="#2a3a7a" stroke-width="1.3"/><path d="M876.6 208.0L879.6 210.6" stroke="#2a3a7a" stroke-width="1.2"/><path d="M891 208.0L888 210.6" stroke="#2a3a7a" stroke-width="1.2"/><path d="M876.6 220.79999999999998L879.6 218.2" stroke="#2a3a7a" stroke-width="1.2"/><path d="M891 220.79999999999998L888 218.2" stroke="#2a3a7a" stroke-width="1.2"/><path d="M879.8 208.4V210.79999999999998H877.4M887.8 208.4V210.79999999999998H890.2M879.8 220.4V218.0H877.4M887.8 220.4V218.0H890.2" stroke="#2a3a7a" stroke-width="1" fill="none"/><path d="M876.4 226.3H891.4" stroke="#b4b9c8" stroke-width="1"/><path d="M886.2 241.4L890.6 245.8" stroke="#d9914a" stroke-width="2.6" stroke-linecap="round"/><circle cx="882.2" cy="237.4" r="5.6" fill="#e8f2fc" stroke="#7a9cc4" stroke-width="1.5"/><path d="M879.6 233.6H883.4L885 235.2V240.4H879.6Z" fill="#fff" stroke="#5a7aa8" stroke-width="0.9"/><path d="M886.2 261.8L890.6 266.2" stroke="#d9914a" stroke-width="2.6" stroke-linecap="round"/><circle cx="882.2" cy="257.8" r="5.6" fill="#e8f2fc" stroke="#7a9cc4" stroke-width="1.5"/><path d="M879 254.2H883.6V256.2M879 254.2V259.6H881" stroke="#3a5a90" stroke-width="0.9" fill="none"/><rect x="881.4" y="256" width="4" height="3.6" fill="#c8dcf4" stroke="#3a5a90" stroke-width="0.8"/><path d="M883.4 259.6V261.4M881.8 261.4H885" stroke="#3a5a90" stroke-width="0.8"/><path d="M886.2 283.0L890.6 287.4" stroke="#d9914a" stroke-width="2.6" stroke-linecap="round"/><circle cx="882.2" cy="279.0" r="5.6" fill="#e8f2fc" stroke="#7a9cc4" stroke-width="1.5"/><path d="M882.4 275.4H886V282H879V278.6H882.4Z" fill="#c8dcf4" stroke="#3a5a90" stroke-width="1"/><path d="M876.4 293.8H891.4" stroke="#b4b9c8" stroke-width="1"/><ellipse cx="879.6" cy="304.4" rx="2.4" ry="2.8" fill="#2a1c1c" transform="rotate(-25 879.6 304.4)"/><ellipse cx="885" cy="306.8" rx="2.6" ry="3" fill="#2a1c1c" transform="rotate(-25 885 306.8)"/><path d="M881 302.4Q883 301.4 884.4 303.4M887.4 304.6Q890.6 302 891.4 304.4" stroke="#8a6a5a" stroke-width="0.7" fill="none"/><circle cx="884.4" cy="306.4" r="0.8" fill="#c04040"/><path d="M893 315V311.8L889.8 315Z" fill="#111"/><path d="M876.4 318.6H891.4" stroke="#b4b9c8" stroke-width="1"/><rect x="882.0" y="323.4" width="8.6" height="10.4" fill="#d4d8e0" stroke="#a4a8b4" stroke-width="0.8"/><rect x="879.4" y="326.2" width="8.6" height="10.4" fill="#d4d8e0" stroke="#a4a8b4" stroke-width="0.8"/><rect x="876.6" y="329.0" width="8.6" height="10.4" fill="#d4d8e0" stroke="#a4a8b4" stroke-width="0.8"/><rect x="876.4" y="346" width="14.8" height="13.4" rx="1" fill="#f0f5fc" stroke="#4a76b8" stroke-width="1"/><rect x="876.4" y="346" width="14.8" height="3.4" fill="#3a74c8"/><path d="M883.6 349.4V359.4M876.4 352.8H891.2M876.4 356.2H891.2" stroke="#6a94d0" stroke-width="0.9"/><path d="M878 351.2H882.4M885 351.2H890M878 354.6H882.4M885 354.6H890" stroke="#b8cceb" stroke-width="1.4"/><path d="M876.4 365H891.4" stroke="#b4b9c8" stroke-width="1"/><path d="M876.6 373.6L879.4 377.4L884 369.8" stroke="#d01c1c" stroke-width="1.7" fill="none"/><path d="M882.2 377.6L886.8 375.4L891.4 377.6L886.8 380.0Z" fill="#7db8f4"/><path d="M882.2 377.6L886.8 380.0L886.8 385.2L882.2 382.6Z" fill="#2a78e0"/><path d="M891.4 377.6L886.8 380.0L886.8 385.2L891.4 382.6Z" fill="#1858c0"/><path d="M876.4 393.6L879 397.6L882.2 391L884 395.4L887.6 390.2" stroke="#d01c1c" stroke-width="1.6" fill="none"/><path d="M882.2 398.6L886.8 396.4L891.4 398.6L886.8 401.0Z" fill="#7db8f4"/><path d="M882.2 398.6L886.8 401.0L886.8 406.2L882.2 403.6Z" fill="#2a78e0"/><path d="M891.4 398.6L886.8 401.0L886.8 406.2L891.4 403.6Z" fill="#1858c0"/><path d="M876.4 411.2H891.4" stroke="#b4b9c8" stroke-width="1"/><path d="M878.6 428.6L882.6 424.8H891.6L888 428.6Z" fill="#e8ecf4" stroke="#4a5a7a" stroke-width="0.9"/><path d="M885.6 426.6V419.6M884.2 421H887" stroke="#3a5a9a" stroke-width="1"/><path d="M883.6 419.8Q878.4 420.4 877.6 425.4" stroke="#d02020" stroke-width="1.1" fill="none"/><path d="M876.2 423.6L877.6 426.8L879.6 424Z" fill="#d02020"/><path d="M876.4 436H891.4" stroke="#b4b9c8" stroke-width="1"/><defs><linearGradient id="wc1" x1="0" y1="0" x2="1" y2="1"><stop offset="0" stop-color="#b4cbf0"/><stop offset="1" stop-color="#4f6fb8"/></linearGradient></defs><path d="M876.8 441.2H887.6L891.2 444.40000000000003V456.2H880.4L876.8 453.0Z" fill="#c2d4f0" stroke="#2a3a6a" stroke-width="1" stroke-linejoin="round"/><path d="M876.8 441.2H887.6L891.2 444.40000000000003H880.4Z" fill="#dfe9f8"/><rect x="880.4" y="444.40000000000003" width="10.8" height="11.8" fill="url(#wc1)"/><path d="M876.8 441.2L880.4 444.40000000000003H891.2M880.4 444.40000000000003V456.2" stroke="#2a3a6a" stroke-width="0.9" fill="none"/><path d="M876.8 441.2H887.6L891.2 444.40000000000003V456.2H880.4L876.8 453.0Z" fill="none" stroke="#2a3a6a" stroke-width="1" stroke-linejoin="round"/><path d="M893.4 457.4V454.2L890.1999999999999 457.4Z" fill="#111"/><path d="M876.8 462.4H887.6L891.2 465.6V477.4H880.4L876.8 474.2Z" fill="#f4f6fb" stroke="#2a3a6a" stroke-width="1" stroke-linejoin="round"/><path d="M876.8 462.4H887.6L891.2 465.6H880.4Z" fill="#ffffff"/><rect x="880.4" y="465.6" width="10.8" height="11.8" fill="#f6e43a"/><path d="M876.8 462.4L880.4 465.6H891.2M880.4 465.6V477.4" stroke="#2a3a6a" stroke-width="0.9" fill="none"/><path d="M876.8 462.4H887.6L891.2 465.6V477.4H880.4L876.8 474.2Z" fill="none" stroke="#2a3a6a" stroke-width="1" stroke-linejoin="round"/><path d="M893.4 478.8V475.6L890.1999999999999 478.8Z" fill="#111"/><path d="M876.8 488.4L885.4 485.6L889 488.2L882.6 497.8Z" fill="#2a70d8"/><path d="M876.8 488.4L885.4 485.6L889 488.2L881 490.4Z" fill="#8ec0f8"/><path d="M884 490L891.6 484" stroke="#e02020" stroke-width="0.9" stroke-dasharray="1.2 1"/><circle cx="891.4" cy="484.2" r="1.2" fill="#e02020"/><rect x="878.6" y="506.8" width="12.4" height="12.6" rx="1" fill="#dfe8f6" stroke="#4a6a9a" stroke-width="1"/><rect x="878.6" y="506.8" width="12.4" height="2.6" fill="#5a84c0"/><text x="875.6" y="510.4" font-family="Liberation Sans, sans-serif" font-weight="bold" font-size="8.6" fill="#1a1ab0">P</text><path d="M888.4 525.8V529.6M889.8 525.6L892 527.7L889.8 529.8Z" stroke="#222" stroke-width="0.6" fill="#222"/></svg>
<svg style="left:863.4px;top:94.6px" width="8" height="5"><path d="M0.4 0.4H6.4L3.4 3.8Z" fill="#111"/></svg>
<div class="a" style="left:0px;top:666px;width:896px;height:17px;background:#f0f0f0;border-top:1px solid #e6e6e6"></div>
<span class="t" style="left:3.50px;top:670.61px;font-size:9.5px;line-height:11px;color:#222;transform:scaleX(0.9912);">&gt;</span>
<div class="a" style="left:677px;top:667px;width:1px;height:16px;background:#d0d0d0"></div>
<div class="a" style="left:750px;top:667px;width:1px;height:16px;background:#d0d0d0"></div>
<div class="a" style="left:822px;top:667px;width:1px;height:16px;background:#d0d0d0"></div></div></body></html>
